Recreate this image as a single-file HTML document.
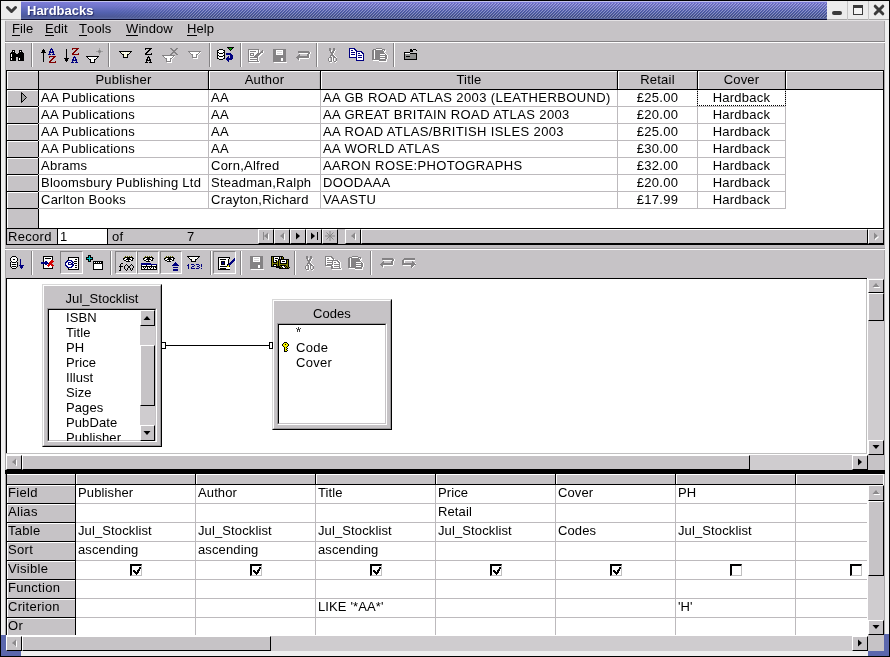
<!DOCTYPE html><html><head><meta charset="utf-8"><style>
html,body{margin:0;padding:0;width:890px;height:657px;overflow:hidden;background:#c6c3c6;}
#root{position:absolute;left:0;top:0;width:890px;height:657px;will-change:transform;}
body{position:relative;font-family:"Liberation Sans",sans-serif;font-size:13px;color:#000;}
div{position:absolute;box-sizing:border-box;}
.t{white-space:nowrap;line-height:15px;letter-spacing:0.2px;}
svg{position:absolute;overflow:visible}
u{text-decoration:none;border-bottom:1px solid #000;display:inline-block;line-height:11px;height:12px}
</style></head><body><div id="root">
<div style="left:0px;top:0px;width:890px;height:657px;background:#000"></div>
<div style="left:1px;top:1px;width:888px;height:655px;background:#efefef"></div>
<div style="left:5px;top:20px;width:880px;height:631px;background:#c6c3c6"></div>
<div style="left:5px;top:20px;width:1px;height:631px;background:#a9a7a9"></div>
<div style="left:884px;top:20px;width:1px;height:631px;background:#a9a7a9"></div>
<div style="left:5px;top:650px;width:880px;height:1px;background:#a9a7a9"></div>
<div style="left:1px;top:635px;width:5px;height:21px;background:#5b67ad"></div>
<div style="left:1px;top:651px;width:20px;height:5px;background:#5b67ad"></div>
<div style="left:884px;top:634px;width:5px;height:22px;background:#5b67ad"></div>
<div style="left:868px;top:651px;width:21px;height:5px;background:#5b67ad"></div>
<svg style="left:21px;top:1px" width="806" height="19" shape-rendering="crispEdges"><defs><linearGradient id="tg" x1="0" y1="0" x2="0" y2="1"><stop offset="0" stop-color="#c4c4f0"/><stop offset="0.06" stop-color="#c4c4f0"/><stop offset="0.07" stop-color="#7c7cd8"/><stop offset="0.25" stop-color="#7276cc"/><stop offset="0.6" stop-color="#5462b0"/><stop offset="0.85" stop-color="#4c5896"/><stop offset="0.9" stop-color="#5a68a2"/><stop offset="1" stop-color="#5a68a2"/></linearGradient><pattern id="tp" width="3" height="3" patternUnits="userSpaceOnUse"><rect x="2" y="0" width="1" height="1" fill="#fff" fill-opacity="0.3"/><rect x="1" y="1" width="1" height="1" fill="#fff" fill-opacity="0.3"/><rect x="0" y="2" width="1" height="1" fill="#fff" fill-opacity="0.3"/><rect x="0" y="0" width="1" height="1" fill="#000" fill-opacity="0.14"/><rect x="2" y="1" width="1" height="1" fill="#000" fill-opacity="0.14"/><rect x="1" y="2" width="1" height="1" fill="#000" fill-opacity="0.14"/></pattern><linearGradient id="tm" x1="0" y1="0" x2="1" y2="0"><stop offset="0.11" stop-color="#fff" stop-opacity="0"/><stop offset="0.22" stop-color="#fff" stop-opacity="1"/></linearGradient><mask id="tmask"><rect width="806" height="19" fill="url(#tm)"/></mask></defs><rect width="806" height="19" fill="url(#tg)"/><rect x="0" y="2" width="806" height="15" fill="url(#tp)" mask="url(#tmask)"/><rect x="0" y="18" width="806" height="1" fill="#0c0c30"/></svg>
<div style="left:1px;top:1px;width:20px;height:19px;background:#ececec;border-bottom:1px solid #a8a8a8"></div>
<svg style="left:5px;top:4px" width="14" height="12"><path d="M2.5 3.5 L6.5 7.5 L10.5 3.5" stroke="#3a3a3a" stroke-width="3" fill="none" stroke-linecap="round" stroke-linejoin="round"/></svg>
<div class="t" style="left:27px;top:3px;color:#fff;font-weight:bold;font-size:13px;letter-spacing:0;line-height:16px;text-shadow:1px 1px 1px rgba(0,0,50,0.55)">Hardbacks</div>
<div style="left:827px;top:1px;width:62px;height:19px;background:#ececec;border-bottom:1px solid #a8a8a8"></div>
<div style="left:847px;top:1px;width:1px;height:19px;background:#c4c4c4"></div>
<div style="left:868px;top:1px;width:1px;height:19px;background:#c4c4c4"></div>
<div style="left:832px;top:11px;width:10px;height:4px;background:#3a3a3a;border-radius:2px"></div>
<div style="left:853px;top:5px;width:10px;height:10px;border:1px solid #3a3a3a;border-top:3px solid #3a3a3a;background:#f4f4f4"></div>
<svg style="left:873px;top:4px" width="12" height="12"><path d="M2.2 2.2L9.8 9.8M9.8 2.2L2.2 9.8" stroke="#3a3a3a" stroke-width="3" stroke-linecap="round"/></svg>
<div style="left:5px;top:20px;width:880px;height:1px;background:#e4e2e4"></div>
<div style="left:5px;top:41px;width:880px;height:1px;background:#848284"></div>
<div style="left:5px;top:42px;width:880px;height:1px;background:#fff"></div>
<div class="t" style="left:12px;top:21px;letter-spacing:0.1px"><u>F</u>ile</div>
<div class="t" style="left:45px;top:21px;letter-spacing:0.1px"><u>E</u>dit</div>
<div class="t" style="left:79px;top:21px;letter-spacing:0.1px"><u>T</u>ools</div>
<div class="t" style="left:126px;top:21px;letter-spacing:0.1px"><u>W</u>indow</div>
<div class="t" style="left:187px;top:21px;letter-spacing:0.1px"><u>H</u>elp</div>
<div style="left:31px;top:43px;width:1px;height:24px;background:#848284"></div>
<div style="left:32px;top:43px;width:1px;height:24px;background:#fff"></div>
<div style="left:108px;top:43px;width:1px;height:24px;background:#848284"></div>
<div style="left:109px;top:43px;width:1px;height:24px;background:#fff"></div>
<div style="left:209px;top:43px;width:1px;height:24px;background:#848284"></div>
<div style="left:210px;top:43px;width:1px;height:24px;background:#fff"></div>
<div style="left:240px;top:43px;width:1px;height:24px;background:#848284"></div>
<div style="left:241px;top:43px;width:1px;height:24px;background:#fff"></div>
<div style="left:316px;top:43px;width:1px;height:24px;background:#848284"></div>
<div style="left:317px;top:43px;width:1px;height:24px;background:#fff"></div>
<div style="left:393px;top:43px;width:1px;height:24px;background:#848284"></div>
<div style="left:394px;top:43px;width:1px;height:24px;background:#fff"></div>
<div style="left:6px;top:70px;width:878px;height:174px;background:#fff;border:1px solid #000"></div>
<div style="left:7px;top:71px;width:876px;height:19px;background:#c6c3c6;border-top:1px solid #fff;border-bottom:1px solid #000"></div>
<div style="left:7px;top:71px;width:32px;height:157px;background:#c6c3c6;border-left:1px solid #fff;border-top:1px solid #fff"></div>
<div style="left:38px;top:71px;width:1px;height:157px;background:#000"></div>
<div style="left:7px;top:89px;width:32px;height:1px;background:#000"></div>
<div style="left:208px;top:71px;width:1px;height:19px;background:#000"></div>
<div style="left:209px;top:72px;width:1px;height:17px;background:#fff"></div>
<div style="left:207px;top:72px;width:1px;height:17px;background:#b4b2b4"></div>
<div class="t" style="left:39px;top:72px;width:169px;text-align:center">Publisher</div>
<div style="left:320px;top:71px;width:1px;height:19px;background:#000"></div>
<div style="left:321px;top:72px;width:1px;height:17px;background:#fff"></div>
<div style="left:319px;top:72px;width:1px;height:17px;background:#b4b2b4"></div>
<div class="t" style="left:209px;top:72px;width:111px;text-align:center">Author</div>
<div style="left:617px;top:71px;width:1px;height:19px;background:#000"></div>
<div style="left:618px;top:72px;width:1px;height:17px;background:#fff"></div>
<div style="left:616px;top:72px;width:1px;height:17px;background:#b4b2b4"></div>
<div class="t" style="left:321px;top:72px;width:296px;text-align:center">Title</div>
<div style="left:697px;top:71px;width:1px;height:19px;background:#000"></div>
<div style="left:698px;top:72px;width:1px;height:17px;background:#fff"></div>
<div style="left:696px;top:72px;width:1px;height:17px;background:#b4b2b4"></div>
<div class="t" style="left:618px;top:72px;width:79px;text-align:center">Retail</div>
<div style="left:785px;top:71px;width:1px;height:19px;background:#000"></div>
<div style="left:786px;top:72px;width:1px;height:17px;background:#fff"></div>
<div style="left:784px;top:72px;width:1px;height:17px;background:#b4b2b4"></div>
<div class="t" style="left:698px;top:72px;width:87px;text-align:center">Cover</div>
<div style="left:7px;top:106px;width:31px;height:1px;background:#000"></div>
<div style="left:8px;top:90px;width:30px;height:16px;border-top:1px solid #fff"></div>
<div style="left:38px;top:106px;width:747px;height:1px;background:#bdbabd"></div>
<div style="left:208px;top:90px;width:1px;height:17px;background:#bdbabd"></div>
<div style="left:320px;top:90px;width:1px;height:17px;background:#bdbabd"></div>
<div style="left:617px;top:90px;width:1px;height:17px;background:#bdbabd"></div>
<div style="left:697px;top:90px;width:1px;height:17px;background:#bdbabd"></div>
<div style="left:785px;top:90px;width:1px;height:17px;background:#bdbabd"></div>
<div class="t" style="left:41px;top:90px;letter-spacing:0.25px">AA Publications</div>
<div class="t" style="left:211px;top:90px;letter-spacing:0.25px">AA</div>
<div class="t" style="left:323px;top:90px;letter-spacing:0.38px">AA GB ROAD ATLAS 2003 (LEATHERBOUND)</div>
<div class="t" style="left:618px;top:90px;width:79px;text-align:center;letter-spacing:0.25px">£25.00</div>
<div class="t" style="left:698px;top:90px;width:87px;text-align:center;letter-spacing:0.25px">Hardback</div>
<div style="left:7px;top:123px;width:31px;height:1px;background:#000"></div>
<div style="left:8px;top:107px;width:30px;height:16px;border-top:1px solid #fff"></div>
<div style="left:38px;top:123px;width:747px;height:1px;background:#bdbabd"></div>
<div style="left:208px;top:107px;width:1px;height:17px;background:#bdbabd"></div>
<div style="left:320px;top:107px;width:1px;height:17px;background:#bdbabd"></div>
<div style="left:617px;top:107px;width:1px;height:17px;background:#bdbabd"></div>
<div style="left:697px;top:107px;width:1px;height:17px;background:#bdbabd"></div>
<div style="left:785px;top:107px;width:1px;height:17px;background:#bdbabd"></div>
<div class="t" style="left:41px;top:107px;letter-spacing:0.25px">AA Publications</div>
<div class="t" style="left:211px;top:107px;letter-spacing:0.25px">AA</div>
<div class="t" style="left:323px;top:107px;letter-spacing:0.38px">AA GREAT BRITAIN ROAD ATLAS 2003</div>
<div class="t" style="left:618px;top:107px;width:79px;text-align:center;letter-spacing:0.25px">£20.00</div>
<div class="t" style="left:698px;top:107px;width:87px;text-align:center;letter-spacing:0.25px">Hardback</div>
<div style="left:7px;top:140px;width:31px;height:1px;background:#000"></div>
<div style="left:8px;top:124px;width:30px;height:16px;border-top:1px solid #fff"></div>
<div style="left:38px;top:140px;width:747px;height:1px;background:#bdbabd"></div>
<div style="left:208px;top:124px;width:1px;height:17px;background:#bdbabd"></div>
<div style="left:320px;top:124px;width:1px;height:17px;background:#bdbabd"></div>
<div style="left:617px;top:124px;width:1px;height:17px;background:#bdbabd"></div>
<div style="left:697px;top:124px;width:1px;height:17px;background:#bdbabd"></div>
<div style="left:785px;top:124px;width:1px;height:17px;background:#bdbabd"></div>
<div class="t" style="left:41px;top:124px;letter-spacing:0.25px">AA Publications</div>
<div class="t" style="left:211px;top:124px;letter-spacing:0.25px">AA</div>
<div class="t" style="left:323px;top:124px;letter-spacing:0.38px">AA ROAD ATLAS/BRITISH ISLES 2003</div>
<div class="t" style="left:618px;top:124px;width:79px;text-align:center;letter-spacing:0.25px">£25.00</div>
<div class="t" style="left:698px;top:124px;width:87px;text-align:center;letter-spacing:0.25px">Hardback</div>
<div style="left:7px;top:157px;width:31px;height:1px;background:#000"></div>
<div style="left:8px;top:141px;width:30px;height:16px;border-top:1px solid #fff"></div>
<div style="left:38px;top:157px;width:747px;height:1px;background:#bdbabd"></div>
<div style="left:208px;top:141px;width:1px;height:17px;background:#bdbabd"></div>
<div style="left:320px;top:141px;width:1px;height:17px;background:#bdbabd"></div>
<div style="left:617px;top:141px;width:1px;height:17px;background:#bdbabd"></div>
<div style="left:697px;top:141px;width:1px;height:17px;background:#bdbabd"></div>
<div style="left:785px;top:141px;width:1px;height:17px;background:#bdbabd"></div>
<div class="t" style="left:41px;top:141px;letter-spacing:0.25px">AA Publications</div>
<div class="t" style="left:211px;top:141px;letter-spacing:0.25px">AA</div>
<div class="t" style="left:323px;top:141px;letter-spacing:0.38px">AA WORLD ATLAS</div>
<div class="t" style="left:618px;top:141px;width:79px;text-align:center;letter-spacing:0.25px">£30.00</div>
<div class="t" style="left:698px;top:141px;width:87px;text-align:center;letter-spacing:0.25px">Hardback</div>
<div style="left:7px;top:174px;width:31px;height:1px;background:#000"></div>
<div style="left:8px;top:158px;width:30px;height:16px;border-top:1px solid #fff"></div>
<div style="left:38px;top:174px;width:747px;height:1px;background:#bdbabd"></div>
<div style="left:208px;top:158px;width:1px;height:17px;background:#bdbabd"></div>
<div style="left:320px;top:158px;width:1px;height:17px;background:#bdbabd"></div>
<div style="left:617px;top:158px;width:1px;height:17px;background:#bdbabd"></div>
<div style="left:697px;top:158px;width:1px;height:17px;background:#bdbabd"></div>
<div style="left:785px;top:158px;width:1px;height:17px;background:#bdbabd"></div>
<div class="t" style="left:41px;top:158px;letter-spacing:0.25px">Abrams</div>
<div class="t" style="left:211px;top:158px;letter-spacing:0.25px">Corn,Alfred</div>
<div class="t" style="left:323px;top:158px;letter-spacing:0.38px">AARON ROSE:PHOTOGRAPHS</div>
<div class="t" style="left:618px;top:158px;width:79px;text-align:center;letter-spacing:0.25px">£32.00</div>
<div class="t" style="left:698px;top:158px;width:87px;text-align:center;letter-spacing:0.25px">Hardback</div>
<div style="left:7px;top:191px;width:31px;height:1px;background:#000"></div>
<div style="left:8px;top:175px;width:30px;height:16px;border-top:1px solid #fff"></div>
<div style="left:38px;top:191px;width:747px;height:1px;background:#bdbabd"></div>
<div style="left:208px;top:175px;width:1px;height:17px;background:#bdbabd"></div>
<div style="left:320px;top:175px;width:1px;height:17px;background:#bdbabd"></div>
<div style="left:617px;top:175px;width:1px;height:17px;background:#bdbabd"></div>
<div style="left:697px;top:175px;width:1px;height:17px;background:#bdbabd"></div>
<div style="left:785px;top:175px;width:1px;height:17px;background:#bdbabd"></div>
<div class="t" style="left:41px;top:175px;letter-spacing:0.25px">Bloomsbury Publishing Ltd</div>
<div class="t" style="left:211px;top:175px;letter-spacing:0.25px">Steadman,Ralph</div>
<div class="t" style="left:323px;top:175px;letter-spacing:0.38px">DOODAAA</div>
<div class="t" style="left:618px;top:175px;width:79px;text-align:center;letter-spacing:0.25px">£20.00</div>
<div class="t" style="left:698px;top:175px;width:87px;text-align:center;letter-spacing:0.25px">Hardback</div>
<div style="left:7px;top:208px;width:31px;height:1px;background:#000"></div>
<div style="left:8px;top:192px;width:30px;height:16px;border-top:1px solid #fff"></div>
<div style="left:38px;top:208px;width:747px;height:1px;background:#bdbabd"></div>
<div style="left:208px;top:192px;width:1px;height:17px;background:#bdbabd"></div>
<div style="left:320px;top:192px;width:1px;height:17px;background:#bdbabd"></div>
<div style="left:617px;top:192px;width:1px;height:17px;background:#bdbabd"></div>
<div style="left:697px;top:192px;width:1px;height:17px;background:#bdbabd"></div>
<div style="left:785px;top:192px;width:1px;height:17px;background:#bdbabd"></div>
<div class="t" style="left:41px;top:192px;letter-spacing:0.25px">Carlton Books</div>
<div class="t" style="left:211px;top:192px;letter-spacing:0.25px">Crayton,Richard</div>
<div class="t" style="left:323px;top:192px;letter-spacing:0.38px">VAASTU</div>
<div class="t" style="left:618px;top:192px;width:79px;text-align:center;letter-spacing:0.25px">£17.99</div>
<div class="t" style="left:698px;top:192px;width:87px;text-align:center;letter-spacing:0.25px">Hardback</div>
<svg style="left:21px;top:92px" width="8" height="12"><path d="M0.5 0.5L5.5 5.5L0.5 10.5Z" fill="#a0a0a0" stroke="#000" stroke-width="1"/></svg>
<div style="left:697px;top:89px;width:89px;height:17px;border:1px dotted #000"></div>
<div style="left:6px;top:228px;width:878px;height:17px;background:#c6c3c6;border:1px solid #000"></div>
<div class="t" style="left:8px;top:229px;letter-spacing:0.3px">Record</div>
<div style="left:57px;top:228px;width:51px;height:17px;background:#fff;border:1px solid #000"></div>
<div class="t" style="left:60px;top:229px;">1</div>
<div class="t" style="left:112px;top:229px;">of</div>
<div class="t" style="left:187px;top:229px;">7</div>
<div style="left:258px;top:229px;width:16px;height:15px;background:#c6c3c6;border-top:1px solid #fff;border-left:1px solid #fff;border-right:1px solid #000;border-bottom:1px solid #000"></div>
<div style="left:274px;top:229px;width:16px;height:15px;background:#c6c3c6;border-top:1px solid #fff;border-left:1px solid #fff;border-right:1px solid #000;border-bottom:1px solid #000"></div>
<div style="left:290px;top:229px;width:16px;height:15px;background:#c6c3c6;border-top:1px solid #fff;border-left:1px solid #fff;border-right:1px solid #000;border-bottom:1px solid #000"></div>
<div style="left:306px;top:229px;width:16px;height:15px;background:#c6c3c6;border-top:1px solid #fff;border-left:1px solid #fff;border-right:1px solid #000;border-bottom:1px solid #000"></div>
<div style="left:322px;top:229px;width:16px;height:15px;background:#c6c3c6;border-top:1px solid #fff;border-left:1px solid #fff;border-right:1px solid #000;border-bottom:1px solid #000"></div>
<svg style="left:1px;top:1px" width="890" height="657"><path d="M268 232.5L268 239.5L264 236Z" fill="#fff"/></svg>
<svg style="left:0;top:0" width="890" height="657"><path d="M268 232.5L268 239.5L264 236Z" fill="#8c8a8c"/></svg>
<div style="left:263px;top:232px;width:1px;height:8px;background:#8c8a8c"></div>
<svg style="left:1px;top:1px" width="890" height="657"><path d="M284 232.5L284 239.5L280 236Z" fill="#fff"/></svg>
<svg style="left:0;top:0" width="890" height="657"><path d="M284 232.5L284 239.5L280 236Z" fill="#8c8a8c"/></svg>
<svg style="left:0;top:0" width="890" height="657"><path d="M296 232.5L296 239.5L300 236Z" fill="#000"/></svg>
<svg style="left:0;top:0" width="890" height="657"><path d="M311 232.5L311 239.5L315 236Z" fill="#000"/></svg>
<div style="left:317px;top:232px;width:1px;height:8px;background:#000"></div>
<svg style="left:325px;top:231px" width="10" height="10" viewBox="0 0 10 10" shape-rendering="crispEdges"><path d="M5 0V10M0 5H10M1.5 1.5L8.5 8.5M8.5 1.5L1.5 8.5" stroke="#888" stroke-width="1" shape-rendering="auto"/></svg>
<div style="left:345px;top:229px;width:16px;height:15px;background:#c6c3c6;border-top:1px solid #fff;border-left:1px solid #fff;border-right:1px solid #000;border-bottom:1px solid #000"></div>
<svg style="left:1px;top:1px" width="890" height="657"><path d="M355 232.5L355 239.5L351 236Z" fill="#fff"/></svg>
<svg style="left:0;top:0" width="890" height="657"><path d="M355 232.5L355 239.5L351 236Z" fill="#8c8a8c"/></svg>
<div style="left:361px;top:229px;width:507px;height:15px;background:#c6c3c6;border-top:1px solid #fff;border-left:1px solid #fff;border-right:1px solid #000;border-bottom:1px solid #000"></div>
<div style="left:868px;top:229px;width:16px;height:15px;background:#c6c3c6;border-top:1px solid #fff;border-left:1px solid #fff;border-right:1px solid #000;border-bottom:1px solid #000"></div>
<svg style="left:1px;top:1px" width="890" height="657"><path d="M874 232.5L874 239.5L878 236Z" fill="#fff"/></svg>
<svg style="left:0;top:0" width="890" height="657"><path d="M874 232.5L874 239.5L878 236Z" fill="#8c8a8c"/></svg>
<div style="left:5px;top:245px;width:880px;height:3px;background:#bfbcbf"></div>
<div style="left:5px;top:248px;width:880px;height:1px;background:#9c9a9c"></div>
<div style="left:5px;top:249px;width:880px;height:1px;background:#fff"></div>
<div style="left:31px;top:251px;width:1px;height:24px;background:#848284"></div>
<div style="left:32px;top:251px;width:1px;height:24px;background:#fff"></div>
<div style="left:110px;top:251px;width:1px;height:24px;background:#848284"></div>
<div style="left:111px;top:251px;width:1px;height:24px;background:#fff"></div>
<div style="left:210px;top:251px;width:1px;height:24px;background:#848284"></div>
<div style="left:211px;top:251px;width:1px;height:24px;background:#fff"></div>
<div style="left:240px;top:251px;width:1px;height:24px;background:#848284"></div>
<div style="left:241px;top:251px;width:1px;height:24px;background:#fff"></div>
<div style="left:294px;top:251px;width:1px;height:24px;background:#848284"></div>
<div style="left:295px;top:251px;width:1px;height:24px;background:#fff"></div>
<div style="left:370px;top:251px;width:1px;height:24px;background:#848284"></div>
<div style="left:371px;top:251px;width:1px;height:24px;background:#fff"></div>
<div style="left:60px;top:251px;width:23px;height:23px;background:#cdcacd;border-top:1px solid #848284;border-left:1px solid #848284;border-right:1px solid #fff;border-bottom:1px solid #fff"></div>
<div style="left:115px;top:251px;width:22px;height:23px;background:#cdcacd;border-top:1px solid #848284;border-left:1px solid #848284;border-right:1px solid #fff;border-bottom:1px solid #fff"></div>
<div style="left:137px;top:251px;width:22px;height:23px;background:#cdcacd;border-top:1px solid #848284;border-left:1px solid #848284;border-right:1px solid #fff;border-bottom:1px solid #fff"></div>
<div style="left:160px;top:251px;width:22px;height:23px;background:#cdcacd;border-top:1px solid #848284;border-left:1px solid #848284;border-right:1px solid #fff;border-bottom:1px solid #fff"></div>
<div style="left:213px;top:251px;width:23px;height:23px;background:#cdcacd;border-top:1px solid #848284;border-left:1px solid #848284;border-right:1px solid #fff;border-bottom:1px solid #fff"></div>
<svg style="left:10px;top:50px" width="14" height="11" shape-rendering="crispEdges"><rect x="2" y="0" width="3" height="1" fill="#000000"/><rect x="9" y="0" width="3" height="1" fill="#000000"/><rect x="2" y="1" width="1" height="1" fill="#000000"/><rect x="3" y="1" width="1" height="1" fill="#ffffff"/><rect x="4" y="1" width="1" height="1" fill="#000000"/><rect x="9" y="1" width="1" height="1" fill="#000000"/><rect x="10" y="1" width="1" height="1" fill="#ffffff"/><rect x="11" y="1" width="1" height="1" fill="#000000"/><rect x="1" y="2" width="4" height="1" fill="#000000"/><rect x="9" y="2" width="4" height="1" fill="#000000"/><rect x="0" y="3" width="6" height="1" fill="#000000"/><rect x="8" y="3" width="6" height="1" fill="#000000"/><rect x="0" y="4" width="1" height="1" fill="#000000"/><rect x="1" y="4" width="1" height="1" fill="#ffffff"/><rect x="2" y="4" width="12" height="1" fill="#000000"/><rect x="0" y="5" width="1" height="1" fill="#000000"/><rect x="1" y="5" width="1" height="1" fill="#ffffff"/><rect x="2" y="5" width="12" height="1" fill="#000000"/><rect x="0" y="6" width="1" height="1" fill="#000000"/><rect x="1" y="6" width="1" height="1" fill="#ffffff"/><rect x="2" y="6" width="12" height="1" fill="#000000"/><rect x="0" y="7" width="6" height="1" fill="#000000"/><rect x="8" y="7" width="6" height="1" fill="#000000"/><rect x="0" y="8" width="1" height="1" fill="#000000"/><rect x="1" y="8" width="1" height="1" fill="#ffffff"/><rect x="2" y="8" width="4" height="1" fill="#000000"/><rect x="8" y="8" width="1" height="1" fill="#000000"/><rect x="9" y="8" width="1" height="1" fill="#ffffff"/><rect x="10" y="8" width="4" height="1" fill="#000000"/><rect x="0" y="9" width="1" height="1" fill="#000000"/><rect x="1" y="9" width="1" height="1" fill="#ffffff"/><rect x="2" y="9" width="4" height="1" fill="#000000"/><rect x="8" y="9" width="1" height="1" fill="#000000"/><rect x="9" y="9" width="1" height="1" fill="#ffffff"/><rect x="10" y="9" width="4" height="1" fill="#000000"/><rect x="0" y="10" width="6" height="1" fill="#000000"/><rect x="8" y="10" width="6" height="1" fill="#000000"/></svg>
<svg style="left:41px;top:48px" width="15" height="15" shape-rendering="crispEdges"><rect x="10" y="0" width="1" height="1" fill="#000080"/><rect x="2" y="1" width="1" height="1" fill="#000000"/><rect x="9" y="1" width="3" height="1" fill="#000080"/><rect x="1" y="2" width="3" height="1" fill="#000000"/><rect x="9" y="2" width="1" height="1" fill="#000080"/><rect x="11" y="2" width="1" height="1" fill="#000080"/><rect x="1" y="3" width="3" height="1" fill="#000000"/><rect x="8" y="3" width="2" height="1" fill="#000080"/><rect x="11" y="3" width="2" height="1" fill="#000080"/><rect x="0" y="4" width="5" height="1" fill="#000000"/><rect x="8" y="4" width="5" height="1" fill="#000080"/><rect x="2" y="5" width="1" height="1" fill="#000000"/><rect x="8" y="5" width="1" height="1" fill="#000080"/><rect x="12" y="5" width="1" height="1" fill="#000080"/><rect x="2" y="6" width="1" height="1" fill="#000000"/><rect x="7" y="6" width="3" height="1" fill="#000080"/><rect x="11" y="6" width="3" height="1" fill="#000080"/><rect x="2" y="7" width="1" height="1" fill="#000000"/><rect x="2" y="8" width="1" height="1" fill="#000000"/><rect x="8" y="8" width="7" height="1" fill="#800000"/><rect x="2" y="9" width="1" height="1" fill="#000000"/><rect x="8" y="9" width="1" height="1" fill="#800000"/><rect x="12" y="9" width="2" height="1" fill="#800000"/><rect x="2" y="10" width="1" height="1" fill="#000000"/><rect x="11" y="10" width="2" height="1" fill="#800000"/><rect x="2" y="11" width="1" height="1" fill="#000000"/><rect x="10" y="11" width="2" height="1" fill="#800000"/><rect x="2" y="12" width="1" height="1" fill="#000000"/><rect x="9" y="12" width="2" height="1" fill="#800000"/><rect x="2" y="13" width="1" height="1" fill="#000000"/><rect x="8" y="13" width="2" height="1" fill="#800000"/><rect x="14" y="13" width="1" height="1" fill="#800000"/><rect x="8" y="14" width="7" height="1" fill="#800000"/></svg>
<svg style="left:64px;top:48px" width="15" height="15" shape-rendering="crispEdges"><rect x="8" y="0" width="7" height="1" fill="#800000"/><rect x="2" y="1" width="1" height="1" fill="#000000"/><rect x="8" y="1" width="1" height="1" fill="#800000"/><rect x="12" y="1" width="2" height="1" fill="#800000"/><rect x="2" y="2" width="1" height="1" fill="#000000"/><rect x="11" y="2" width="2" height="1" fill="#800000"/><rect x="2" y="3" width="1" height="1" fill="#000000"/><rect x="10" y="3" width="2" height="1" fill="#800000"/><rect x="2" y="4" width="1" height="1" fill="#000000"/><rect x="9" y="4" width="2" height="1" fill="#800000"/><rect x="2" y="5" width="1" height="1" fill="#000000"/><rect x="8" y="5" width="2" height="1" fill="#800000"/><rect x="14" y="5" width="1" height="1" fill="#800000"/><rect x="2" y="6" width="1" height="1" fill="#000000"/><rect x="8" y="6" width="7" height="1" fill="#800000"/><rect x="2" y="7" width="1" height="1" fill="#000000"/><rect x="2" y="8" width="1" height="1" fill="#000000"/><rect x="10" y="8" width="1" height="1" fill="#000080"/><rect x="2" y="9" width="1" height="1" fill="#000000"/><rect x="9" y="9" width="3" height="1" fill="#000080"/><rect x="0" y="10" width="5" height="1" fill="#000000"/><rect x="9" y="10" width="1" height="1" fill="#000080"/><rect x="11" y="10" width="1" height="1" fill="#000080"/><rect x="1" y="11" width="3" height="1" fill="#000000"/><rect x="8" y="11" width="2" height="1" fill="#000080"/><rect x="11" y="11" width="2" height="1" fill="#000080"/><rect x="1" y="12" width="3" height="1" fill="#000000"/><rect x="8" y="12" width="5" height="1" fill="#000080"/><rect x="2" y="13" width="1" height="1" fill="#000000"/><rect x="8" y="13" width="1" height="1" fill="#000080"/><rect x="12" y="13" width="1" height="1" fill="#000080"/><rect x="7" y="14" width="3" height="1" fill="#000080"/><rect x="11" y="14" width="3" height="1" fill="#000080"/></svg>
<svg style="left:86px;top:56px" width="13" height="7" shape-rendering="crispEdges"><rect x="0" y="0" width="13" height="1" fill="#000000"/><rect x="1" y="1" width="1" height="1" fill="#000000"/><rect x="2" y="1" width="9" height="1" fill="#ffffff"/><rect x="11" y="1" width="1" height="1" fill="#000000"/><rect x="2" y="2" width="1" height="1" fill="#000000"/><rect x="3" y="2" width="3" height="1" fill="#ffffff"/><rect x="6" y="2" width="1" height="1" fill="#f4f4d8"/><rect x="7" y="2" width="3" height="1" fill="#ffffff"/><rect x="10" y="2" width="1" height="1" fill="#000000"/><rect x="3" y="3" width="2" height="1" fill="#000000"/><rect x="5" y="3" width="3" height="1" fill="#ffffff"/><rect x="8" y="3" width="2" height="1" fill="#000000"/><rect x="4" y="4" width="1" height="1" fill="#000000"/><rect x="5" y="4" width="3" height="1" fill="#ffffff"/><rect x="8" y="4" width="1" height="1" fill="#000000"/><rect x="4" y="5" width="1" height="1" fill="#000000"/><rect x="5" y="5" width="3" height="1" fill="#ffffff"/><rect x="8" y="5" width="1" height="1" fill="#000000"/><rect x="4" y="6" width="5" height="1" fill="#000000"/></svg>
<svg style="left:96px;top:48px" width="7" height="7" shape-rendering="crispEdges"><rect x="3" y="0" width="1" height="1" fill="#a0a0a0"/><rect x="3" y="1" width="1" height="1" fill="#a0a0a0"/><rect x="2" y="2" width="1" height="1" fill="#a0a0a0"/><rect x="3" y="2" width="1" height="1" fill="#848284"/><rect x="4" y="2" width="1" height="1" fill="#a0a0a0"/><rect x="0" y="3" width="2" height="1" fill="#a0a0a0"/><rect x="2" y="3" width="3" height="1" fill="#848284"/><rect x="5" y="3" width="2" height="1" fill="#a0a0a0"/><rect x="2" y="4" width="1" height="1" fill="#a0a0a0"/><rect x="3" y="4" width="1" height="1" fill="#848284"/><rect x="4" y="4" width="1" height="1" fill="#a0a0a0"/><rect x="3" y="5" width="1" height="1" fill="#a0a0a0"/><rect x="3" y="6" width="1" height="1" fill="#a0a0a0"/></svg>
<svg style="left:119px;top:51px" width="13" height="7" shape-rendering="crispEdges"><rect x="0" y="0" width="13" height="1" fill="#000000"/><rect x="1" y="1" width="1" height="1" fill="#000000"/><rect x="2" y="1" width="3" height="1" fill="#f4f4d8"/><rect x="5" y="1" width="1" height="1" fill="#ffffff"/><rect x="6" y="1" width="1" height="1" fill="#f4f4d8"/><rect x="7" y="1" width="1" height="1" fill="#ffffff"/><rect x="8" y="1" width="3" height="1" fill="#f4f4d8"/><rect x="11" y="1" width="1" height="1" fill="#000000"/><rect x="2" y="2" width="1" height="1" fill="#000000"/><rect x="3" y="2" width="2" height="1" fill="#f4f4d8"/><rect x="5" y="2" width="1" height="1" fill="#ffffff"/><rect x="6" y="2" width="1" height="1" fill="#f4f4d8"/><rect x="7" y="2" width="1" height="1" fill="#ffffff"/><rect x="8" y="2" width="2" height="1" fill="#f4f4d8"/><rect x="10" y="2" width="1" height="1" fill="#000000"/><rect x="3" y="3" width="2" height="1" fill="#000000"/><rect x="5" y="3" width="3" height="1" fill="#f4f4d8"/><rect x="8" y="3" width="2" height="1" fill="#000000"/><rect x="4" y="4" width="1" height="1" fill="#000000"/><rect x="5" y="4" width="3" height="1" fill="#f4f4d8"/><rect x="8" y="4" width="1" height="1" fill="#000000"/><rect x="4" y="5" width="1" height="1" fill="#000000"/><rect x="5" y="5" width="3" height="1" fill="#f4f4d8"/><rect x="8" y="5" width="1" height="1" fill="#000000"/><rect x="4" y="6" width="5" height="1" fill="#000000"/></svg>
<svg style="left:145px;top:48px" width="8" height="15" shape-rendering="crispEdges"><rect x="0" y="0" width="7" height="1" fill="#000000"/><rect x="0" y="1" width="1" height="1" fill="#000000"/><rect x="4" y="1" width="2" height="1" fill="#000000"/><rect x="3" y="2" width="2" height="1" fill="#000000"/><rect x="2" y="3" width="2" height="1" fill="#000000"/><rect x="1" y="4" width="2" height="1" fill="#000000"/><rect x="0" y="5" width="2" height="1" fill="#000000"/><rect x="6" y="5" width="1" height="1" fill="#000000"/><rect x="0" y="6" width="7" height="1" fill="#000000"/><rect x="3" y="8" width="1" height="1" fill="#000000"/><rect x="2" y="9" width="3" height="1" fill="#000000"/><rect x="2" y="10" width="1" height="1" fill="#000000"/><rect x="4" y="10" width="1" height="1" fill="#000000"/><rect x="1" y="11" width="2" height="1" fill="#000000"/><rect x="4" y="11" width="2" height="1" fill="#000000"/><rect x="1" y="12" width="5" height="1" fill="#000000"/><rect x="1" y="13" width="1" height="1" fill="#000000"/><rect x="5" y="13" width="1" height="1" fill="#000000"/><rect x="0" y="14" width="3" height="1" fill="#000000"/><rect x="4" y="14" width="3" height="1" fill="#000000"/></svg>
<svg style="left:162px;top:48px" width="16" height="16" shape-rendering="crispEdges"><rect x="8" y="0" width="2" height="1" fill="#848284"/><rect x="14" y="0" width="2" height="1" fill="#848284"/><rect x="9" y="1" width="2" height="1" fill="#848284"/><rect x="13" y="1" width="2" height="1" fill="#848284"/><rect x="10" y="2" width="4" height="1" fill="#848284"/><rect x="11" y="3" width="2" height="1" fill="#848284"/><rect x="10" y="4" width="4" height="1" fill="#848284"/><rect x="9" y="5" width="2" height="1" fill="#848284"/><rect x="13" y="5" width="2" height="1" fill="#848284"/><rect x="8" y="6" width="2" height="1" fill="#848284"/><rect x="14" y="6" width="2" height="1" fill="#848284"/><rect x="0" y="7" width="13" height="1" fill="#848284"/><rect x="1" y="8" width="1" height="1" fill="#848284"/><rect x="2" y="8" width="9" height="1" fill="#ffffff"/><rect x="11" y="8" width="1" height="1" fill="#848284"/><rect x="12" y="8" width="1" height="1" fill="#ffffff"/><rect x="2" y="9" width="1" height="1" fill="#848284"/><rect x="3" y="9" width="7" height="1" fill="#ffffff"/><rect x="10" y="9" width="1" height="1" fill="#848284"/><rect x="11" y="9" width="1" height="1" fill="#ffffff"/><rect x="3" y="10" width="2" height="1" fill="#848284"/><rect x="5" y="10" width="3" height="1" fill="#ffffff"/><rect x="8" y="10" width="2" height="1" fill="#848284"/><rect x="10" y="10" width="1" height="1" fill="#ffffff"/><rect x="4" y="11" width="1" height="1" fill="#848284"/><rect x="5" y="11" width="3" height="1" fill="#ffffff"/><rect x="8" y="11" width="1" height="1" fill="#848284"/><rect x="9" y="11" width="1" height="1" fill="#ffffff"/><rect x="4" y="12" width="1" height="1" fill="#848284"/><rect x="5" y="12" width="3" height="1" fill="#ffffff"/><rect x="8" y="12" width="1" height="1" fill="#848284"/><rect x="9" y="12" width="1" height="1" fill="#ffffff"/><rect x="4" y="13" width="5" height="1" fill="#848284"/><rect x="9" y="13" width="1" height="1" fill="#ffffff"/><rect x="5" y="14" width="5" height="1" fill="#ffffff"/></svg>
<svg style="left:188px;top:51px" width="13" height="8" shape-rendering="crispEdges"><rect x="0" y="0" width="13" height="1" fill="#848284"/><rect x="1" y="1" width="1" height="1" fill="#848284"/><rect x="2" y="1" width="9" height="1" fill="#ffffff"/><rect x="11" y="1" width="1" height="1" fill="#848284"/><rect x="12" y="1" width="1" height="1" fill="#ffffff"/><rect x="2" y="2" width="1" height="1" fill="#848284"/><rect x="3" y="2" width="7" height="1" fill="#ffffff"/><rect x="10" y="2" width="1" height="1" fill="#848284"/><rect x="11" y="2" width="1" height="1" fill="#ffffff"/><rect x="3" y="3" width="2" height="1" fill="#848284"/><rect x="5" y="3" width="3" height="1" fill="#ffffff"/><rect x="8" y="3" width="2" height="1" fill="#848284"/><rect x="10" y="3" width="1" height="1" fill="#ffffff"/><rect x="4" y="4" width="1" height="1" fill="#848284"/><rect x="5" y="4" width="3" height="1" fill="#ffffff"/><rect x="8" y="4" width="1" height="1" fill="#848284"/><rect x="9" y="4" width="1" height="1" fill="#ffffff"/><rect x="4" y="5" width="1" height="1" fill="#848284"/><rect x="5" y="5" width="3" height="1" fill="#ffffff"/><rect x="8" y="5" width="1" height="1" fill="#848284"/><rect x="9" y="5" width="1" height="1" fill="#ffffff"/><rect x="4" y="6" width="5" height="1" fill="#848284"/><rect x="9" y="6" width="1" height="1" fill="#ffffff"/><rect x="5" y="7" width="5" height="1" fill="#ffffff"/></svg>
<svg style="left:217px;top:47px" width="18" height="15" shape-rendering="crispEdges"><rect x="10" y="0" width="7" height="1" fill="#000000"/><rect x="11" y="1" width="1" height="1" fill="#000000"/><rect x="12" y="1" width="3" height="1" fill="#00a000"/><rect x="15" y="1" width="1" height="1" fill="#000000"/><rect x="2" y="2" width="4" height="1" fill="#000000"/><rect x="12" y="2" width="1" height="1" fill="#000000"/><rect x="13" y="2" width="1" height="1" fill="#00a000"/><rect x="14" y="2" width="1" height="1" fill="#000000"/><rect x="0" y="3" width="2" height="1" fill="#000000"/><rect x="2" y="3" width="4" height="1" fill="#ffffff"/><rect x="6" y="3" width="2" height="1" fill="#000000"/><rect x="13" y="3" width="1" height="1" fill="#000000"/><rect x="0" y="4" width="1" height="1" fill="#000000"/><rect x="1" y="4" width="6" height="1" fill="#ffffff"/><rect x="7" y="4" width="1" height="1" fill="#000000"/><rect x="0" y="5" width="2" height="1" fill="#000000"/><rect x="2" y="5" width="4" height="1" fill="#ffffff"/><rect x="6" y="5" width="2" height="1" fill="#000000"/><rect x="0" y="6" width="1" height="1" fill="#000000"/><rect x="1" y="6" width="1" height="1" fill="#ffffff"/><rect x="2" y="6" width="4" height="1" fill="#000000"/><rect x="6" y="6" width="1" height="1" fill="#ffffff"/><rect x="7" y="6" width="1" height="1" fill="#000000"/><rect x="9" y="6" width="5" height="1" fill="#000080"/><rect x="0" y="7" width="1" height="1" fill="#000000"/><rect x="1" y="7" width="6" height="1" fill="#ffffff"/><rect x="7" y="7" width="1" height="1" fill="#000000"/><rect x="9" y="7" width="6" height="1" fill="#000080"/><rect x="0" y="8" width="2" height="1" fill="#000000"/><rect x="2" y="8" width="4" height="1" fill="#ffffff"/><rect x="6" y="8" width="2" height="1" fill="#000000"/><rect x="13" y="8" width="3" height="1" fill="#000080"/><rect x="0" y="9" width="1" height="1" fill="#000000"/><rect x="1" y="9" width="1" height="1" fill="#ffffff"/><rect x="2" y="9" width="4" height="1" fill="#000000"/><rect x="6" y="9" width="1" height="1" fill="#ffffff"/><rect x="7" y="9" width="1" height="1" fill="#000000"/><rect x="11" y="9" width="1" height="1" fill="#000080"/><rect x="13" y="9" width="3" height="1" fill="#000080"/><rect x="0" y="10" width="1" height="1" fill="#000000"/><rect x="1" y="10" width="6" height="1" fill="#ffffff"/><rect x="7" y="10" width="1" height="1" fill="#000000"/><rect x="10" y="10" width="2" height="1" fill="#000080"/><rect x="13" y="10" width="3" height="1" fill="#000080"/><rect x="0" y="11" width="2" height="1" fill="#000000"/><rect x="2" y="11" width="4" height="1" fill="#ffffff"/><rect x="6" y="11" width="2" height="1" fill="#000000"/><rect x="9" y="11" width="7" height="1" fill="#000080"/><rect x="2" y="12" width="4" height="1" fill="#000000"/><rect x="9" y="12" width="6" height="1" fill="#000080"/><rect x="10" y="13" width="2" height="1" fill="#000080"/><rect x="11" y="14" width="1" height="1" fill="#000080"/></svg>
<svg style="left:248px;top:49px" width="17" height="14" shape-rendering="crispEdges"><rect x="0" y="0" width="11" height="1" fill="#848284"/><rect x="0" y="1" width="1" height="1" fill="#848284"/><rect x="1" y="1" width="9" height="1" fill="#ffffff"/><rect x="10" y="1" width="1" height="1" fill="#848284"/><rect x="11" y="1" width="1" height="1" fill="#ffffff"/><rect x="14" y="1" width="1" height="1" fill="#848284"/><rect x="0" y="2" width="1" height="1" fill="#848284"/><rect x="1" y="2" width="1" height="1" fill="#ffffff"/><rect x="2" y="2" width="6" height="1" fill="#848284"/><rect x="8" y="2" width="2" height="1" fill="#ffffff"/><rect x="10" y="2" width="1" height="1" fill="#848284"/><rect x="11" y="2" width="1" height="1" fill="#ffffff"/><rect x="13" y="2" width="2" height="1" fill="#848284"/><rect x="15" y="2" width="1" height="1" fill="#ffffff"/><rect x="0" y="3" width="1" height="1" fill="#848284"/><rect x="1" y="3" width="9" height="1" fill="#ffffff"/><rect x="10" y="3" width="1" height="1" fill="#848284"/><rect x="11" y="3" width="1" height="1" fill="#ffffff"/><rect x="12" y="3" width="3" height="1" fill="#848284"/><rect x="15" y="3" width="1" height="1" fill="#ffffff"/><rect x="0" y="4" width="1" height="1" fill="#848284"/><rect x="1" y="4" width="1" height="1" fill="#ffffff"/><rect x="2" y="4" width="4" height="1" fill="#848284"/><rect x="6" y="4" width="3" height="1" fill="#ffffff"/><rect x="9" y="4" width="4" height="1" fill="#848284"/><rect x="13" y="4" width="2" height="1" fill="#ffffff"/><rect x="0" y="5" width="1" height="1" fill="#848284"/><rect x="1" y="5" width="1" height="1" fill="#ffffff"/><rect x="2" y="5" width="1" height="1" fill="#848284"/><rect x="3" y="5" width="2" height="1" fill="#ffffff"/><rect x="5" y="5" width="1" height="1" fill="#848284"/><rect x="6" y="5" width="2" height="1" fill="#ffffff"/><rect x="8" y="5" width="4" height="1" fill="#848284"/><rect x="12" y="5" width="2" height="1" fill="#ffffff"/><rect x="0" y="6" width="1" height="1" fill="#848284"/><rect x="1" y="6" width="1" height="1" fill="#ffffff"/><rect x="2" y="6" width="4" height="1" fill="#848284"/><rect x="6" y="6" width="1" height="1" fill="#ffffff"/><rect x="7" y="6" width="4" height="1" fill="#848284"/><rect x="11" y="6" width="2" height="1" fill="#ffffff"/><rect x="0" y="7" width="1" height="1" fill="#848284"/><rect x="1" y="7" width="5" height="1" fill="#ffffff"/><rect x="6" y="7" width="4" height="1" fill="#848284"/><rect x="10" y="7" width="2" height="1" fill="#ffffff"/><rect x="0" y="8" width="1" height="1" fill="#848284"/><rect x="1" y="8" width="1" height="1" fill="#ffffff"/><rect x="2" y="8" width="8" height="1" fill="#848284"/><rect x="10" y="8" width="1" height="1" fill="#ffffff"/><rect x="0" y="9" width="1" height="1" fill="#848284"/><rect x="1" y="9" width="8" height="1" fill="#ffffff"/><rect x="9" y="9" width="1" height="1" fill="#848284"/><rect x="10" y="9" width="1" height="1" fill="#ffffff"/><rect x="0" y="10" width="1" height="1" fill="#848284"/><rect x="1" y="10" width="1" height="1" fill="#ffffff"/><rect x="2" y="10" width="8" height="1" fill="#848284"/><rect x="10" y="10" width="1" height="1" fill="#ffffff"/><rect x="0" y="11" width="1" height="1" fill="#848284"/><rect x="1" y="11" width="8" height="1" fill="#ffffff"/><rect x="9" y="11" width="1" height="1" fill="#848284"/><rect x="10" y="11" width="1" height="1" fill="#ffffff"/><rect x="0" y="12" width="11" height="1" fill="#848284"/><rect x="11" y="12" width="1" height="1" fill="#ffffff"/><rect x="1" y="13" width="11" height="1" fill="#ffffff"/></svg>
<svg style="left:273px;top:49px" width="14" height="14" shape-rendering="crispEdges"><rect x="0" y="0" width="13" height="1" fill="#848284"/><rect x="0" y="1" width="3" height="1" fill="#848284"/><rect x="3" y="1" width="7" height="1" fill="#ffffff"/><rect x="10" y="1" width="3" height="1" fill="#848284"/><rect x="0" y="2" width="3" height="1" fill="#848284"/><rect x="3" y="2" width="1" height="1" fill="#ffffff"/><rect x="4" y="2" width="5" height="1" fill="#d8d6d8"/><rect x="9" y="2" width="1" height="1" fill="#ffffff"/><rect x="10" y="2" width="3" height="1" fill="#848284"/><rect x="0" y="3" width="3" height="1" fill="#848284"/><rect x="3" y="3" width="7" height="1" fill="#ffffff"/><rect x="10" y="3" width="3" height="1" fill="#848284"/><rect x="0" y="4" width="3" height="1" fill="#848284"/><rect x="3" y="4" width="1" height="1" fill="#ffffff"/><rect x="4" y="4" width="5" height="1" fill="#d8d6d8"/><rect x="9" y="4" width="1" height="1" fill="#ffffff"/><rect x="10" y="4" width="3" height="1" fill="#848284"/><rect x="0" y="5" width="3" height="1" fill="#848284"/><rect x="3" y="5" width="7" height="1" fill="#ffffff"/><rect x="10" y="5" width="3" height="1" fill="#848284"/><rect x="0" y="6" width="13" height="1" fill="#848284"/><rect x="0" y="7" width="13" height="1" fill="#848284"/><rect x="0" y="8" width="13" height="1" fill="#848284"/><rect x="0" y="9" width="8" height="1" fill="#848284"/><rect x="8" y="9" width="2" height="1" fill="#ffffff"/><rect x="10" y="9" width="3" height="1" fill="#848284"/><rect x="0" y="10" width="8" height="1" fill="#848284"/><rect x="8" y="10" width="2" height="1" fill="#ffffff"/><rect x="10" y="10" width="3" height="1" fill="#848284"/><rect x="0" y="11" width="8" height="1" fill="#848284"/><rect x="8" y="11" width="2" height="1" fill="#ffffff"/><rect x="10" y="11" width="3" height="1" fill="#848284"/><rect x="0" y="12" width="13" height="1" fill="#848284"/><rect x="1" y="13" width="13" height="1" fill="#ffffff"/></svg>
<svg style="left:295px;top:51px" width="16" height="10" shape-rendering="crispEdges"><rect x="3" y="0" width="11" height="1" fill="#848284"/><rect x="3" y="1" width="12" height="1" fill="#848284"/><rect x="15" y="1" width="1" height="1" fill="#ffffff"/><rect x="4" y="2" width="9" height="1" fill="#ffffff"/><rect x="13" y="2" width="2" height="1" fill="#848284"/><rect x="15" y="2" width="1" height="1" fill="#ffffff"/><rect x="4" y="3" width="1" height="1" fill="#848284"/><rect x="12" y="3" width="2" height="1" fill="#848284"/><rect x="14" y="3" width="1" height="1" fill="#ffffff"/><rect x="3" y="4" width="2" height="1" fill="#848284"/><rect x="12" y="4" width="2" height="1" fill="#848284"/><rect x="14" y="4" width="1" height="1" fill="#ffffff"/><rect x="2" y="5" width="12" height="1" fill="#848284"/><rect x="14" y="5" width="1" height="1" fill="#ffffff"/><rect x="1" y="6" width="13" height="1" fill="#848284"/><rect x="14" y="6" width="1" height="1" fill="#ffffff"/><rect x="2" y="7" width="2" height="1" fill="#848284"/><rect x="4" y="7" width="10" height="1" fill="#ffffff"/><rect x="3" y="8" width="1" height="1" fill="#848284"/><rect x="4" y="8" width="1" height="1" fill="#ffffff"/><rect x="4" y="9" width="1" height="1" fill="#ffffff"/></svg>
<svg style="left:328px;top:48px" width="9" height="15" shape-rendering="crispEdges"><rect x="1" y="0" width="2" height="1" fill="#848284"/><rect x="5" y="0" width="2" height="1" fill="#848284"/><rect x="1" y="1" width="2" height="1" fill="#848284"/><rect x="5" y="1" width="2" height="1" fill="#848284"/><rect x="1" y="2" width="2" height="1" fill="#848284"/><rect x="3" y="2" width="1" height="1" fill="#ffffff"/><rect x="5" y="2" width="2" height="1" fill="#848284"/><rect x="7" y="2" width="1" height="1" fill="#ffffff"/><rect x="2" y="3" width="1" height="1" fill="#848284"/><rect x="3" y="3" width="1" height="1" fill="#ffffff"/><rect x="4" y="3" width="2" height="1" fill="#848284"/><rect x="6" y="3" width="1" height="1" fill="#ffffff"/><rect x="2" y="4" width="4" height="1" fill="#848284"/><rect x="6" y="4" width="1" height="1" fill="#ffffff"/><rect x="3" y="5" width="2" height="1" fill="#848284"/><rect x="5" y="5" width="1" height="1" fill="#ffffff"/><rect x="3" y="6" width="2" height="1" fill="#848284"/><rect x="5" y="6" width="1" height="1" fill="#ffffff"/><rect x="2" y="7" width="4" height="1" fill="#848284"/><rect x="6" y="7" width="1" height="1" fill="#ffffff"/><rect x="2" y="8" width="1" height="1" fill="#848284"/><rect x="3" y="8" width="1" height="1" fill="#ffffff"/><rect x="5" y="8" width="2" height="1" fill="#848284"/><rect x="7" y="8" width="1" height="1" fill="#ffffff"/><rect x="1" y="9" width="3" height="1" fill="#848284"/><rect x="4" y="9" width="1" height="1" fill="#ffffff"/><rect x="5" y="9" width="3" height="1" fill="#848284"/><rect x="8" y="9" width="1" height="1" fill="#ffffff"/><rect x="0" y="10" width="1" height="1" fill="#848284"/><rect x="1" y="10" width="1" height="1" fill="#ffffff"/><rect x="3" y="10" width="1" height="1" fill="#848284"/><rect x="4" y="10" width="1" height="1" fill="#ffffff"/><rect x="5" y="10" width="1" height="1" fill="#848284"/><rect x="6" y="10" width="1" height="1" fill="#ffffff"/><rect x="8" y="10" width="1" height="1" fill="#848284"/><rect x="0" y="11" width="1" height="1" fill="#848284"/><rect x="1" y="11" width="1" height="1" fill="#ffffff"/><rect x="3" y="11" width="1" height="1" fill="#848284"/><rect x="4" y="11" width="1" height="1" fill="#ffffff"/><rect x="5" y="11" width="1" height="1" fill="#848284"/><rect x="6" y="11" width="1" height="1" fill="#ffffff"/><rect x="8" y="11" width="1" height="1" fill="#848284"/><rect x="0" y="12" width="1" height="1" fill="#848284"/><rect x="1" y="12" width="1" height="1" fill="#ffffff"/><rect x="3" y="12" width="1" height="1" fill="#848284"/><rect x="4" y="12" width="1" height="1" fill="#ffffff"/><rect x="5" y="12" width="1" height="1" fill="#848284"/><rect x="6" y="12" width="1" height="1" fill="#ffffff"/><rect x="8" y="12" width="1" height="1" fill="#848284"/><rect x="1" y="13" width="3" height="1" fill="#848284"/><rect x="4" y="13" width="1" height="1" fill="#ffffff"/><rect x="6" y="13" width="2" height="1" fill="#848284"/><rect x="8" y="13" width="1" height="1" fill="#ffffff"/><rect x="2" y="14" width="2" height="1" fill="#ffffff"/><rect x="7" y="14" width="1" height="1" fill="#ffffff"/></svg>
<svg style="left:349px;top:48px" width="16" height="13" shape-rendering="crispEdges"><rect x="0" y="0" width="6" height="1" fill="#000080"/><rect x="0" y="1" width="1" height="1" fill="#000080"/><rect x="1" y="1" width="4" height="1" fill="#ffffff"/><rect x="5" y="1" width="2" height="1" fill="#000080"/><rect x="0" y="2" width="1" height="1" fill="#000080"/><rect x="1" y="2" width="1" height="1" fill="#ffffff"/><rect x="2" y="2" width="2" height="1" fill="#000080"/><rect x="4" y="2" width="2" height="1" fill="#ffffff"/><rect x="6" y="2" width="2" height="1" fill="#000080"/><rect x="0" y="3" width="1" height="1" fill="#000080"/><rect x="1" y="3" width="6" height="1" fill="#ffffff"/><rect x="7" y="3" width="6" height="1" fill="#000080"/><rect x="0" y="4" width="1" height="1" fill="#000080"/><rect x="1" y="4" width="1" height="1" fill="#ffffff"/><rect x="2" y="4" width="4" height="1" fill="#000080"/><rect x="6" y="4" width="1" height="1" fill="#ffffff"/><rect x="7" y="4" width="1" height="1" fill="#000080"/><rect x="8" y="4" width="4" height="1" fill="#ffffff"/><rect x="12" y="4" width="2" height="1" fill="#000080"/><rect x="0" y="5" width="1" height="1" fill="#000080"/><rect x="1" y="5" width="6" height="1" fill="#ffffff"/><rect x="7" y="5" width="1" height="1" fill="#000080"/><rect x="8" y="5" width="1" height="1" fill="#ffffff"/><rect x="9" y="5" width="2" height="1" fill="#000080"/><rect x="11" y="5" width="2" height="1" fill="#ffffff"/><rect x="13" y="5" width="2" height="1" fill="#000080"/><rect x="0" y="6" width="1" height="1" fill="#000080"/><rect x="1" y="6" width="1" height="1" fill="#ffffff"/><rect x="2" y="6" width="4" height="1" fill="#000080"/><rect x="6" y="6" width="1" height="1" fill="#ffffff"/><rect x="7" y="6" width="1" height="1" fill="#000080"/><rect x="8" y="6" width="6" height="1" fill="#ffffff"/><rect x="14" y="6" width="1" height="1" fill="#000080"/><rect x="0" y="7" width="1" height="1" fill="#000080"/><rect x="1" y="7" width="6" height="1" fill="#ffffff"/><rect x="7" y="7" width="1" height="1" fill="#000080"/><rect x="8" y="7" width="1" height="1" fill="#ffffff"/><rect x="9" y="7" width="4" height="1" fill="#000080"/><rect x="13" y="7" width="1" height="1" fill="#ffffff"/><rect x="14" y="7" width="1" height="1" fill="#000080"/><rect x="0" y="8" width="1" height="1" fill="#000080"/><rect x="1" y="8" width="6" height="1" fill="#ffffff"/><rect x="7" y="8" width="1" height="1" fill="#000080"/><rect x="8" y="8" width="6" height="1" fill="#ffffff"/><rect x="14" y="8" width="1" height="1" fill="#000080"/><rect x="0" y="9" width="8" height="1" fill="#000080"/><rect x="8" y="9" width="1" height="1" fill="#ffffff"/><rect x="9" y="9" width="4" height="1" fill="#000080"/><rect x="13" y="9" width="1" height="1" fill="#ffffff"/><rect x="14" y="9" width="1" height="1" fill="#000080"/><rect x="7" y="10" width="1" height="1" fill="#000080"/><rect x="8" y="10" width="6" height="1" fill="#ffffff"/><rect x="14" y="10" width="1" height="1" fill="#000080"/><rect x="7" y="11" width="1" height="1" fill="#000080"/><rect x="8" y="11" width="6" height="1" fill="#ffffff"/><rect x="14" y="11" width="1" height="1" fill="#000080"/><rect x="7" y="12" width="8" height="1" fill="#000080"/></svg>
<svg style="left:372px;top:48px" width="16" height="14" shape-rendering="crispEdges"><rect x="4" y="0" width="6" height="1" fill="#848284"/><rect x="1" y="1" width="3" height="1" fill="#848284"/><rect x="4" y="1" width="6" height="1" fill="#ffffff"/><rect x="10" y="1" width="3" height="1" fill="#848284"/><rect x="0" y="2" width="2" height="1" fill="#848284"/><rect x="2" y="2" width="1" height="1" fill="#ffffff"/><rect x="3" y="2" width="8" height="1" fill="#848284"/><rect x="11" y="2" width="1" height="1" fill="#ffffff"/><rect x="12" y="2" width="1" height="1" fill="#848284"/><rect x="13" y="2" width="1" height="1" fill="#ffffff"/><rect x="0" y="3" width="2" height="1" fill="#848284"/><rect x="2" y="3" width="1" height="1" fill="#ffffff"/><rect x="3" y="3" width="9" height="1" fill="#848284"/><rect x="12" y="3" width="2" height="1" fill="#ffffff"/><rect x="0" y="4" width="2" height="1" fill="#848284"/><rect x="2" y="4" width="1" height="1" fill="#ffffff"/><rect x="3" y="4" width="9" height="1" fill="#848284"/><rect x="12" y="4" width="1" height="1" fill="#ffffff"/><rect x="0" y="5" width="2" height="1" fill="#848284"/><rect x="2" y="5" width="1" height="1" fill="#ffffff"/><rect x="3" y="5" width="10" height="1" fill="#848284"/><rect x="13" y="5" width="1" height="1" fill="#ffffff"/><rect x="0" y="6" width="2" height="1" fill="#848284"/><rect x="2" y="6" width="1" height="1" fill="#ffffff"/><rect x="3" y="6" width="5" height="1" fill="#848284"/><rect x="8" y="6" width="5" height="1" fill="#ffffff"/><rect x="13" y="6" width="1" height="1" fill="#848284"/><rect x="14" y="6" width="1" height="1" fill="#ffffff"/><rect x="0" y="7" width="2" height="1" fill="#848284"/><rect x="2" y="7" width="1" height="1" fill="#ffffff"/><rect x="3" y="7" width="12" height="1" fill="#848284"/><rect x="15" y="7" width="1" height="1" fill="#ffffff"/><rect x="0" y="8" width="2" height="1" fill="#848284"/><rect x="2" y="8" width="1" height="1" fill="#ffffff"/><rect x="3" y="8" width="5" height="1" fill="#848284"/><rect x="8" y="8" width="5" height="1" fill="#ffffff"/><rect x="13" y="8" width="2" height="1" fill="#848284"/><rect x="15" y="8" width="1" height="1" fill="#ffffff"/><rect x="0" y="9" width="2" height="1" fill="#848284"/><rect x="2" y="9" width="1" height="1" fill="#ffffff"/><rect x="3" y="9" width="12" height="1" fill="#848284"/><rect x="15" y="9" width="1" height="1" fill="#ffffff"/><rect x="0" y="10" width="2" height="1" fill="#848284"/><rect x="2" y="10" width="1" height="1" fill="#ffffff"/><rect x="3" y="10" width="5" height="1" fill="#848284"/><rect x="8" y="10" width="5" height="1" fill="#ffffff"/><rect x="13" y="10" width="2" height="1" fill="#848284"/><rect x="15" y="10" width="1" height="1" fill="#ffffff"/><rect x="0" y="11" width="14" height="1" fill="#848284"/><rect x="14" y="11" width="1" height="1" fill="#ffffff"/><rect x="1" y="12" width="6" height="1" fill="#ffffff"/><rect x="7" y="12" width="7" height="1" fill="#848284"/><rect x="14" y="12" width="1" height="1" fill="#ffffff"/><rect x="7" y="13" width="8" height="1" fill="#ffffff"/></svg>
<svg style="left:404px;top:49px" width="13" height="11" shape-rendering="crispEdges"><rect x="6" y="0" width="2" height="1" fill="#000000"/><rect x="9" y="0" width="3" height="1" fill="#000000"/><rect x="6" y="1" width="3" height="1" fill="#000000"/><rect x="12" y="1" width="1" height="1" fill="#000000"/><rect x="6" y="2" width="3" height="1" fill="#000000"/><rect x="0" y="3" width="6" height="1" fill="#000000"/><rect x="0" y="4" width="1" height="1" fill="#000000"/><rect x="1" y="4" width="5" height="1" fill="#ffffff"/><rect x="6" y="4" width="7" height="1" fill="#000000"/><rect x="0" y="5" width="1" height="1" fill="#000000"/><rect x="1" y="5" width="11" height="1" fill="#909090"/><rect x="12" y="5" width="1" height="1" fill="#000000"/><rect x="0" y="6" width="1" height="1" fill="#000000"/><rect x="1" y="6" width="11" height="1" fill="#909090"/><rect x="12" y="6" width="1" height="1" fill="#000000"/><rect x="0" y="7" width="1" height="1" fill="#000000"/><rect x="1" y="7" width="1" height="1" fill="#909090"/><rect x="2" y="7" width="4" height="1" fill="#000000"/><rect x="6" y="7" width="6" height="1" fill="#909090"/><rect x="12" y="7" width="1" height="1" fill="#000000"/><rect x="0" y="8" width="1" height="1" fill="#000000"/><rect x="1" y="8" width="11" height="1" fill="#909090"/><rect x="12" y="8" width="1" height="1" fill="#000000"/><rect x="0" y="9" width="1" height="1" fill="#000000"/><rect x="1" y="9" width="11" height="1" fill="#909090"/><rect x="12" y="9" width="1" height="1" fill="#000000"/><rect x="0" y="10" width="13" height="1" fill="#000000"/></svg>
<svg style="left:10px;top:256px" width="14" height="13" shape-rendering="crispEdges"><rect x="2" y="0" width="4" height="1" fill="#000000"/><rect x="1" y="1" width="1" height="1" fill="#000000"/><rect x="2" y="1" width="4" height="1" fill="#ffffff"/><rect x="6" y="1" width="1" height="1" fill="#000000"/><rect x="0" y="2" width="1" height="1" fill="#000000"/><rect x="1" y="2" width="6" height="1" fill="#ffffff"/><rect x="7" y="2" width="1" height="1" fill="#000000"/><rect x="0" y="3" width="1" height="1" fill="#000000"/><rect x="1" y="3" width="2" height="1" fill="#ffffff"/><rect x="3" y="3" width="2" height="1" fill="#000000"/><rect x="5" y="3" width="2" height="1" fill="#ffffff"/><rect x="7" y="3" width="1" height="1" fill="#000000"/><rect x="10" y="3" width="1" height="1" fill="#000080"/><rect x="0" y="4" width="1" height="1" fill="#000000"/><rect x="1" y="4" width="6" height="1" fill="#ffffff"/><rect x="7" y="4" width="1" height="1" fill="#000000"/><rect x="10" y="4" width="1" height="1" fill="#000080"/><rect x="1" y="5" width="1" height="1" fill="#000000"/><rect x="2" y="5" width="4" height="1" fill="#ffffff"/><rect x="6" y="5" width="1" height="1" fill="#000000"/><rect x="10" y="5" width="1" height="1" fill="#000080"/><rect x="0" y="6" width="1" height="1" fill="#000000"/><rect x="2" y="6" width="4" height="1" fill="#000000"/><rect x="7" y="6" width="1" height="1" fill="#000000"/><rect x="10" y="6" width="1" height="1" fill="#000080"/><rect x="0" y="7" width="1" height="1" fill="#000000"/><rect x="1" y="7" width="6" height="1" fill="#ffffff"/><rect x="7" y="7" width="1" height="1" fill="#000000"/><rect x="10" y="7" width="1" height="1" fill="#000080"/><rect x="0" y="8" width="1" height="1" fill="#000000"/><rect x="2" y="8" width="4" height="1" fill="#000000"/><rect x="7" y="8" width="1" height="1" fill="#000000"/><rect x="10" y="8" width="1" height="1" fill="#000080"/><rect x="0" y="9" width="1" height="1" fill="#000000"/><rect x="1" y="9" width="6" height="1" fill="#ffffff"/><rect x="7" y="9" width="1" height="1" fill="#000000"/><rect x="9" y="9" width="5" height="1" fill="#000080"/><rect x="0" y="10" width="1" height="1" fill="#000000"/><rect x="2" y="10" width="4" height="1" fill="#000000"/><rect x="7" y="10" width="1" height="1" fill="#000000"/><rect x="10" y="10" width="3" height="1" fill="#000080"/><rect x="1" y="11" width="1" height="1" fill="#000000"/><rect x="2" y="11" width="4" height="1" fill="#ffffff"/><rect x="6" y="11" width="1" height="1" fill="#000000"/><rect x="10" y="11" width="3" height="1" fill="#000080"/><rect x="2" y="12" width="4" height="1" fill="#000000"/><rect x="11" y="12" width="1" height="1" fill="#000080"/></svg>
<svg style="left:41px;top:256px" width="14" height="13" shape-rendering="crispEdges"><rect x="2" y="0" width="10" height="1" fill="#000000"/><rect x="2" y="1" width="1" height="1" fill="#000000"/><rect x="3" y="1" width="8" height="1" fill="#ffffff"/><rect x="11" y="1" width="1" height="1" fill="#000000"/><rect x="2" y="2" width="1" height="1" fill="#000000"/><rect x="3" y="2" width="1" height="1" fill="#ffffff"/><rect x="4" y="2" width="6" height="1" fill="#000000"/><rect x="10" y="2" width="1" height="1" fill="#ffffff"/><rect x="11" y="2" width="1" height="1" fill="#000000"/><rect x="2" y="3" width="1" height="1" fill="#000000"/><rect x="3" y="3" width="8" height="1" fill="#ffffff"/><rect x="11" y="3" width="1" height="1" fill="#000000"/><rect x="2" y="4" width="1" height="1" fill="#000000"/><rect x="3" y="4" width="7" height="1" fill="#ffffff"/><rect x="10" y="4" width="2" height="1" fill="#d00000"/><rect x="2" y="5" width="1" height="1" fill="#000000"/><rect x="3" y="5" width="1" height="1" fill="#ffffff"/><rect x="4" y="5" width="2" height="1" fill="#000080"/><rect x="6" y="5" width="3" height="1" fill="#ffffff"/><rect x="9" y="5" width="4" height="1" fill="#d00000"/><rect x="0" y="6" width="7" height="1" fill="#000080"/><rect x="7" y="6" width="1" height="1" fill="#ffffff"/><rect x="8" y="6" width="4" height="1" fill="#d00000"/><rect x="0" y="7" width="8" height="1" fill="#000080"/><rect x="8" y="7" width="3" height="1" fill="#d00000"/><rect x="2" y="8" width="1" height="1" fill="#000000"/><rect x="3" y="8" width="1" height="1" fill="#ffffff"/><rect x="4" y="8" width="2" height="1" fill="#000080"/><rect x="6" y="8" width="1" height="1" fill="#ffffff"/><rect x="7" y="8" width="5" height="1" fill="#d00000"/><rect x="2" y="9" width="1" height="1" fill="#000000"/><rect x="3" y="9" width="3" height="1" fill="#ffffff"/><rect x="6" y="9" width="3" height="1" fill="#d00000"/><rect x="9" y="9" width="1" height="1" fill="#ffffff"/><rect x="10" y="9" width="3" height="1" fill="#d00000"/><rect x="2" y="10" width="1" height="1" fill="#000000"/><rect x="3" y="10" width="4" height="1" fill="#ffffff"/><rect x="7" y="10" width="1" height="1" fill="#d00000"/><rect x="8" y="10" width="3" height="1" fill="#ffffff"/><rect x="11" y="10" width="1" height="1" fill="#d00000"/><rect x="2" y="11" width="1" height="1" fill="#000000"/><rect x="3" y="11" width="8" height="1" fill="#ffffff"/><rect x="11" y="11" width="1" height="1" fill="#000000"/><rect x="2" y="12" width="10" height="1" fill="#000000"/></svg>
<svg style="left:65px;top:257px" width="14" height="13" shape-rendering="crispEdges"><rect x="3" y="0" width="11" height="1" fill="#000000"/><rect x="3" y="1" width="1" height="1" fill="#000000"/><rect x="4" y="1" width="9" height="1" fill="#ffffff"/><rect x="13" y="1" width="1" height="1" fill="#000000"/><rect x="3" y="2" width="1" height="1" fill="#000000"/><rect x="4" y="2" width="6" height="1" fill="#ffffff"/><rect x="10" y="2" width="2" height="1" fill="#000000"/><rect x="12" y="2" width="1" height="1" fill="#ffffff"/><rect x="13" y="2" width="1" height="1" fill="#000000"/><rect x="2" y="3" width="5" height="1" fill="#000080"/><rect x="7" y="3" width="6" height="1" fill="#ffffff"/><rect x="13" y="3" width="1" height="1" fill="#000000"/><rect x="1" y="4" width="2" height="1" fill="#000080"/><rect x="3" y="4" width="3" height="1" fill="#ffffff"/><rect x="6" y="4" width="2" height="1" fill="#000080"/><rect x="8" y="4" width="1" height="1" fill="#ffffff"/><rect x="9" y="4" width="3" height="1" fill="#000000"/><rect x="12" y="4" width="1" height="1" fill="#ffffff"/><rect x="13" y="4" width="1" height="1" fill="#000000"/><rect x="0" y="5" width="2" height="1" fill="#000080"/><rect x="2" y="5" width="1" height="1" fill="#ffffff"/><rect x="3" y="5" width="3" height="1" fill="#000080"/><rect x="6" y="5" width="1" height="1" fill="#ffffff"/><rect x="7" y="5" width="2" height="1" fill="#000080"/><rect x="9" y="5" width="4" height="1" fill="#ffffff"/><rect x="13" y="5" width="1" height="1" fill="#000000"/><rect x="0" y="6" width="1" height="1" fill="#000080"/><rect x="1" y="6" width="2" height="1" fill="#ffffff"/><rect x="3" y="6" width="1" height="1" fill="#000080"/><rect x="4" y="6" width="2" height="1" fill="#ffffff"/><rect x="6" y="6" width="2" height="1" fill="#000080"/><rect x="8" y="6" width="1" height="1" fill="#ffffff"/><rect x="9" y="6" width="3" height="1" fill="#000000"/><rect x="12" y="6" width="1" height="1" fill="#ffffff"/><rect x="13" y="6" width="1" height="1" fill="#000000"/><rect x="0" y="7" width="1" height="1" fill="#000080"/><rect x="1" y="7" width="2" height="1" fill="#ffffff"/><rect x="3" y="7" width="6" height="1" fill="#000080"/><rect x="9" y="7" width="4" height="1" fill="#ffffff"/><rect x="13" y="7" width="1" height="1" fill="#000000"/><rect x="0" y="8" width="2" height="1" fill="#000080"/><rect x="2" y="8" width="5" height="1" fill="#ffffff"/><rect x="7" y="8" width="2" height="1" fill="#000080"/><rect x="9" y="8" width="1" height="1" fill="#ffffff"/><rect x="10" y="8" width="2" height="1" fill="#000000"/><rect x="12" y="8" width="1" height="1" fill="#ffffff"/><rect x="13" y="8" width="1" height="1" fill="#000000"/><rect x="1" y="9" width="2" height="1" fill="#000080"/><rect x="3" y="9" width="3" height="1" fill="#ffffff"/><rect x="6" y="9" width="2" height="1" fill="#000080"/><rect x="8" y="9" width="5" height="1" fill="#ffffff"/><rect x="13" y="9" width="1" height="1" fill="#000000"/><rect x="2" y="10" width="5" height="1" fill="#000080"/><rect x="7" y="10" width="3" height="1" fill="#ffffff"/><rect x="10" y="10" width="2" height="1" fill="#000000"/><rect x="12" y="10" width="1" height="1" fill="#ffffff"/><rect x="13" y="10" width="1" height="1" fill="#000000"/><rect x="3" y="11" width="1" height="1" fill="#000000"/><rect x="4" y="11" width="9" height="1" fill="#ffffff"/><rect x="13" y="11" width="1" height="1" fill="#000000"/><rect x="3" y="12" width="11" height="1" fill="#000000"/></svg>
<svg style="left:86px;top:255px" width="17" height="15" shape-rendering="crispEdges"><rect x="2" y="0" width="3" height="1" fill="#000000"/><rect x="2" y="1" width="1" height="1" fill="#000000"/><rect x="3" y="1" width="1" height="1" fill="#00c0c0"/><rect x="4" y="1" width="1" height="1" fill="#000000"/><rect x="0" y="2" width="3" height="1" fill="#000000"/><rect x="3" y="2" width="1" height="1" fill="#00c0c0"/><rect x="4" y="2" width="3" height="1" fill="#000000"/><rect x="0" y="3" width="1" height="1" fill="#000000"/><rect x="1" y="3" width="5" height="1" fill="#00c0c0"/><rect x="6" y="3" width="1" height="1" fill="#000000"/><rect x="0" y="4" width="3" height="1" fill="#000000"/><rect x="3" y="4" width="1" height="1" fill="#00c0c0"/><rect x="4" y="4" width="3" height="1" fill="#000000"/><rect x="2" y="5" width="1" height="1" fill="#000000"/><rect x="3" y="5" width="1" height="1" fill="#00c0c0"/><rect x="4" y="5" width="1" height="1" fill="#000000"/><rect x="2" y="6" width="3" height="1" fill="#000000"/><rect x="7" y="6" width="10" height="1" fill="#000000"/><rect x="7" y="7" width="1" height="1" fill="#000000"/><rect x="8" y="7" width="1" height="1" fill="#ffffff"/><rect x="9" y="7" width="1" height="1" fill="#000000"/><rect x="10" y="7" width="1" height="1" fill="#ffffff"/><rect x="11" y="7" width="1" height="1" fill="#000000"/><rect x="12" y="7" width="1" height="1" fill="#ffffff"/><rect x="13" y="7" width="1" height="1" fill="#000000"/><rect x="14" y="7" width="1" height="1" fill="#ffffff"/><rect x="15" y="7" width="2" height="1" fill="#000000"/><rect x="7" y="8" width="10" height="1" fill="#000000"/><rect x="7" y="9" width="1" height="1" fill="#000000"/><rect x="8" y="9" width="8" height="1" fill="#ffffff"/><rect x="16" y="9" width="1" height="1" fill="#000000"/><rect x="7" y="10" width="1" height="1" fill="#000000"/><rect x="8" y="10" width="8" height="1" fill="#ffffff"/><rect x="16" y="10" width="1" height="1" fill="#000000"/><rect x="7" y="11" width="1" height="1" fill="#000000"/><rect x="8" y="11" width="8" height="1" fill="#ffffff"/><rect x="16" y="11" width="1" height="1" fill="#000000"/><rect x="7" y="12" width="1" height="1" fill="#000000"/><rect x="8" y="12" width="8" height="1" fill="#ffffff"/><rect x="16" y="12" width="1" height="1" fill="#000000"/><rect x="7" y="13" width="1" height="1" fill="#000000"/><rect x="8" y="13" width="8" height="1" fill="#ffffff"/><rect x="16" y="13" width="1" height="1" fill="#000000"/><rect x="7" y="14" width="10" height="1" fill="#000000"/></svg>
<svg style="left:119px;top:256px" width="16" height="15" shape-rendering="crispEdges"><rect x="6" y="0" width="1" height="1" fill="#606000"/><rect x="8" y="0" width="1" height="1" fill="#606000"/><rect x="10" y="0" width="1" height="1" fill="#606000"/><rect x="12" y="0" width="1" height="1" fill="#606000"/><rect x="5" y="1" width="1" height="1" fill="#606000"/><rect x="6" y="1" width="8" height="1" fill="#000000"/><rect x="4" y="2" width="2" height="1" fill="#000000"/><rect x="6" y="2" width="2" height="1" fill="#ffffff"/><rect x="8" y="2" width="3" height="1" fill="#000000"/><rect x="11" y="2" width="2" height="1" fill="#ffffff"/><rect x="13" y="2" width="2" height="1" fill="#000000"/><rect x="4" y="3" width="1" height="1" fill="#000000"/><rect x="5" y="3" width="2" height="1" fill="#ffffff"/><rect x="7" y="3" width="5" height="1" fill="#000000"/><rect x="12" y="3" width="1" height="1" fill="#ffffff"/><rect x="13" y="3" width="1" height="1" fill="#000000"/><rect x="5" y="4" width="2" height="1" fill="#000000"/><rect x="7" y="4" width="2" height="1" fill="#ffffff"/><rect x="9" y="4" width="1" height="1" fill="#000000"/><rect x="10" y="4" width="2" height="1" fill="#ffffff"/><rect x="12" y="4" width="2" height="1" fill="#000000"/><rect x="7" y="5" width="4" height="1" fill="#000000"/><rect x="2" y="7" width="2" height="1" fill="#000000"/><rect x="1" y="8" width="1" height="1" fill="#000000"/><rect x="7" y="8" width="1" height="1" fill="#000000"/><rect x="12" y="8" width="1" height="1" fill="#000000"/><rect x="1" y="9" width="1" height="1" fill="#000000"/><rect x="6" y="9" width="1" height="1" fill="#000000"/><rect x="8" y="9" width="1" height="1" fill="#000000"/><rect x="11" y="9" width="1" height="1" fill="#000000"/><rect x="13" y="9" width="1" height="1" fill="#000000"/><rect x="0" y="10" width="4" height="1" fill="#000000"/><rect x="5" y="10" width="1" height="1" fill="#000000"/><rect x="9" y="10" width="2" height="1" fill="#000000"/><rect x="14" y="10" width="1" height="1" fill="#000000"/><rect x="1" y="11" width="1" height="1" fill="#000000"/><rect x="5" y="11" width="1" height="1" fill="#000000"/><rect x="9" y="11" width="2" height="1" fill="#000000"/><rect x="14" y="11" width="1" height="1" fill="#000000"/><rect x="1" y="12" width="1" height="1" fill="#000000"/><rect x="5" y="12" width="1" height="1" fill="#000000"/><rect x="8" y="12" width="1" height="1" fill="#000000"/><rect x="11" y="12" width="1" height="1" fill="#000000"/><rect x="13" y="12" width="1" height="1" fill="#000000"/><rect x="1" y="13" width="1" height="1" fill="#000000"/><rect x="6" y="13" width="1" height="1" fill="#000000"/><rect x="8" y="13" width="1" height="1" fill="#000000"/><rect x="11" y="13" width="1" height="1" fill="#000000"/><rect x="13" y="13" width="1" height="1" fill="#000000"/><rect x="0" y="14" width="2" height="1" fill="#000000"/><rect x="7" y="14" width="1" height="1" fill="#000000"/><rect x="12" y="14" width="1" height="1" fill="#000000"/></svg>
<svg style="left:141px;top:256px" width="17" height="15" shape-rendering="crispEdges"><rect x="4" y="0" width="1" height="1" fill="#606000"/><rect x="6" y="0" width="1" height="1" fill="#606000"/><rect x="8" y="0" width="1" height="1" fill="#606000"/><rect x="10" y="0" width="1" height="1" fill="#606000"/><rect x="3" y="1" width="1" height="1" fill="#606000"/><rect x="4" y="1" width="8" height="1" fill="#000000"/><rect x="2" y="2" width="2" height="1" fill="#000000"/><rect x="4" y="2" width="2" height="1" fill="#ffffff"/><rect x="6" y="2" width="3" height="1" fill="#000000"/><rect x="9" y="2" width="2" height="1" fill="#ffffff"/><rect x="11" y="2" width="2" height="1" fill="#000000"/><rect x="2" y="3" width="1" height="1" fill="#000000"/><rect x="3" y="3" width="2" height="1" fill="#ffffff"/><rect x="5" y="3" width="5" height="1" fill="#000000"/><rect x="10" y="3" width="1" height="1" fill="#ffffff"/><rect x="11" y="3" width="1" height="1" fill="#000000"/><rect x="3" y="4" width="2" height="1" fill="#000000"/><rect x="5" y="4" width="2" height="1" fill="#ffffff"/><rect x="7" y="4" width="1" height="1" fill="#000000"/><rect x="8" y="4" width="2" height="1" fill="#ffffff"/><rect x="10" y="4" width="2" height="1" fill="#000000"/><rect x="5" y="5" width="4" height="1" fill="#000000"/><rect x="0" y="7" width="10" height="1" fill="#000080"/><rect x="0" y="8" width="16" height="1" fill="#000080"/><rect x="0" y="9" width="1" height="1" fill="#000000"/><rect x="1" y="9" width="4" height="1" fill="#ffffff"/><rect x="5" y="9" width="1" height="1" fill="#000000"/><rect x="6" y="9" width="4" height="1" fill="#ffffff"/><rect x="10" y="9" width="1" height="1" fill="#000000"/><rect x="11" y="9" width="4" height="1" fill="#ffffff"/><rect x="15" y="9" width="1" height="1" fill="#000000"/><rect x="0" y="10" width="16" height="1" fill="#000000"/><rect x="0" y="11" width="1" height="1" fill="#000000"/><rect x="1" y="11" width="1" height="1" fill="#ffffff"/><rect x="2" y="11" width="1" height="1" fill="#000000"/><rect x="3" y="11" width="1" height="1" fill="#ffffff"/><rect x="4" y="11" width="1" height="1" fill="#000000"/><rect x="5" y="11" width="1" height="1" fill="#ffffff"/><rect x="6" y="11" width="1" height="1" fill="#000000"/><rect x="7" y="11" width="1" height="1" fill="#ffffff"/><rect x="8" y="11" width="1" height="1" fill="#000000"/><rect x="9" y="11" width="1" height="1" fill="#ffffff"/><rect x="10" y="11" width="1" height="1" fill="#000000"/><rect x="11" y="11" width="1" height="1" fill="#ffffff"/><rect x="12" y="11" width="1" height="1" fill="#000000"/><rect x="13" y="11" width="1" height="1" fill="#ffffff"/><rect x="14" y="11" width="2" height="1" fill="#000000"/><rect x="0" y="12" width="1" height="1" fill="#000000"/><rect x="1" y="12" width="2" height="1" fill="#ffffff"/><rect x="3" y="12" width="1" height="1" fill="#000000"/><rect x="4" y="12" width="2" height="1" fill="#ffffff"/><rect x="6" y="12" width="1" height="1" fill="#000000"/><rect x="7" y="12" width="2" height="1" fill="#ffffff"/><rect x="9" y="12" width="1" height="1" fill="#000000"/><rect x="10" y="12" width="2" height="1" fill="#ffffff"/><rect x="12" y="12" width="1" height="1" fill="#000000"/><rect x="13" y="12" width="2" height="1" fill="#ffffff"/><rect x="15" y="12" width="1" height="1" fill="#000000"/><rect x="0" y="13" width="16" height="1" fill="#000000"/></svg>
<svg style="left:164px;top:256px" width="15" height="15" shape-rendering="crispEdges"><rect x="2" y="0" width="1" height="1" fill="#606000"/><rect x="4" y="0" width="1" height="1" fill="#606000"/><rect x="6" y="0" width="1" height="1" fill="#606000"/><rect x="8" y="0" width="1" height="1" fill="#606000"/><rect x="1" y="1" width="1" height="1" fill="#606000"/><rect x="2" y="1" width="8" height="1" fill="#000000"/><rect x="0" y="2" width="2" height="1" fill="#000000"/><rect x="2" y="2" width="2" height="1" fill="#ffffff"/><rect x="4" y="2" width="3" height="1" fill="#000000"/><rect x="7" y="2" width="2" height="1" fill="#ffffff"/><rect x="9" y="2" width="2" height="1" fill="#000000"/><rect x="0" y="3" width="1" height="1" fill="#000000"/><rect x="1" y="3" width="2" height="1" fill="#ffffff"/><rect x="3" y="3" width="5" height="1" fill="#000000"/><rect x="8" y="3" width="1" height="1" fill="#ffffff"/><rect x="9" y="3" width="1" height="1" fill="#000000"/><rect x="1" y="4" width="2" height="1" fill="#000000"/><rect x="3" y="4" width="2" height="1" fill="#ffffff"/><rect x="5" y="4" width="1" height="1" fill="#000000"/><rect x="6" y="4" width="2" height="1" fill="#ffffff"/><rect x="8" y="4" width="2" height="1" fill="#000000"/><rect x="3" y="5" width="4" height="1" fill="#000000"/><rect x="11" y="6" width="1" height="1" fill="#000080"/><rect x="10" y="7" width="3" height="1" fill="#000080"/><rect x="9" y="8" width="5" height="1" fill="#000080"/><rect x="8" y="9" width="7" height="1" fill="#000080"/><rect x="9" y="11" width="5" height="1" fill="#000080"/><rect x="9" y="13" width="5" height="1" fill="#000080"/><rect x="9" y="14" width="5" height="1" fill="#000080"/></svg>
<svg style="left:187px;top:256px" width="15" height="13" shape-rendering="crispEdges"><rect x="0" y="0" width="13" height="1" fill="#000000"/><rect x="1" y="1" width="1" height="1" fill="#000000"/><rect x="2" y="1" width="9" height="1" fill="#ffffff"/><rect x="11" y="1" width="1" height="1" fill="#000000"/><rect x="2" y="2" width="1" height="1" fill="#000000"/><rect x="3" y="2" width="2" height="1" fill="#ffffff"/><rect x="5" y="2" width="2" height="1" fill="#f4f4d8"/><rect x="7" y="2" width="3" height="1" fill="#ffffff"/><rect x="10" y="2" width="1" height="1" fill="#000000"/><rect x="3" y="3" width="2" height="1" fill="#000000"/><rect x="5" y="3" width="3" height="1" fill="#ffffff"/><rect x="8" y="3" width="2" height="1" fill="#000000"/><rect x="4" y="4" width="1" height="1" fill="#000000"/><rect x="5" y="4" width="3" height="1" fill="#ffffff"/><rect x="8" y="4" width="1" height="1" fill="#000000"/><rect x="4" y="5" width="5" height="1" fill="#000000"/><rect x="1" y="8" width="1" height="1" fill="#000080"/><rect x="4" y="8" width="3" height="1" fill="#000080"/><rect x="9" y="8" width="3" height="1" fill="#000080"/><rect x="14" y="8" width="1" height="1" fill="#000080"/><rect x="0" y="9" width="2" height="1" fill="#000080"/><rect x="7" y="9" width="1" height="1" fill="#000080"/><rect x="12" y="9" width="1" height="1" fill="#000080"/><rect x="14" y="9" width="1" height="1" fill="#000080"/><rect x="1" y="10" width="1" height="1" fill="#000080"/><rect x="5" y="10" width="2" height="1" fill="#000080"/><rect x="10" y="10" width="2" height="1" fill="#000080"/><rect x="14" y="10" width="1" height="1" fill="#000080"/><rect x="1" y="11" width="1" height="1" fill="#000080"/><rect x="4" y="11" width="1" height="1" fill="#000080"/><rect x="12" y="11" width="1" height="1" fill="#000080"/><rect x="1" y="12" width="1" height="1" fill="#000080"/><rect x="4" y="12" width="4" height="1" fill="#000080"/><rect x="9" y="12" width="3" height="1" fill="#000080"/><rect x="14" y="12" width="1" height="1" fill="#000080"/></svg>
<svg style="left:218px;top:257px" width="17" height="13" shape-rendering="crispEdges"><rect x="0" y="0" width="12" height="1" fill="#000000"/><rect x="0" y="1" width="1" height="1" fill="#000000"/><rect x="1" y="1" width="10" height="1" fill="#ffffff"/><rect x="11" y="1" width="1" height="1" fill="#000000"/><rect x="16" y="1" width="1" height="1" fill="#000080"/><rect x="0" y="2" width="1" height="1" fill="#000000"/><rect x="1" y="2" width="1" height="1" fill="#ffffff"/><rect x="2" y="2" width="6" height="1" fill="#000000"/><rect x="8" y="2" width="2" height="1" fill="#ffffff"/><rect x="10" y="2" width="1" height="1" fill="#000000"/><rect x="15" y="2" width="2" height="1" fill="#000080"/><rect x="0" y="3" width="1" height="1" fill="#000000"/><rect x="1" y="3" width="9" height="1" fill="#ffffff"/><rect x="10" y="3" width="1" height="1" fill="#000000"/><rect x="14" y="3" width="3" height="1" fill="#000080"/><rect x="0" y="4" width="1" height="1" fill="#000000"/><rect x="1" y="4" width="2" height="1" fill="#ffffff"/><rect x="3" y="4" width="4" height="1" fill="#000000"/><rect x="7" y="4" width="3" height="1" fill="#ffffff"/><rect x="10" y="4" width="1" height="1" fill="#000000"/><rect x="13" y="4" width="3" height="1" fill="#000080"/><rect x="0" y="5" width="1" height="1" fill="#000000"/><rect x="1" y="5" width="2" height="1" fill="#ffffff"/><rect x="3" y="5" width="1" height="1" fill="#000000"/><rect x="4" y="5" width="2" height="1" fill="#000080"/><rect x="6" y="5" width="1" height="1" fill="#000000"/><rect x="7" y="5" width="3" height="1" fill="#ffffff"/><rect x="10" y="5" width="1" height="1" fill="#000000"/><rect x="12" y="5" width="3" height="1" fill="#000080"/><rect x="0" y="6" width="1" height="1" fill="#000000"/><rect x="1" y="6" width="2" height="1" fill="#ffffff"/><rect x="3" y="6" width="1" height="1" fill="#000000"/><rect x="4" y="6" width="2" height="1" fill="#000080"/><rect x="6" y="6" width="1" height="1" fill="#000000"/><rect x="7" y="6" width="3" height="1" fill="#ffffff"/><rect x="10" y="6" width="1" height="1" fill="#000000"/><rect x="11" y="6" width="3" height="1" fill="#000080"/><rect x="0" y="7" width="1" height="1" fill="#000000"/><rect x="1" y="7" width="2" height="1" fill="#ffffff"/><rect x="3" y="7" width="4" height="1" fill="#000000"/><rect x="7" y="7" width="2" height="1" fill="#ffffff"/><rect x="9" y="7" width="1" height="1" fill="#000000"/><rect x="10" y="7" width="3" height="1" fill="#000080"/><rect x="0" y="8" width="1" height="1" fill="#000000"/><rect x="1" y="8" width="8" height="1" fill="#ffffff"/><rect x="9" y="8" width="1" height="1" fill="#000000"/><rect x="10" y="8" width="1" height="1" fill="#f0f000"/><rect x="11" y="8" width="1" height="1" fill="#000080"/><rect x="0" y="9" width="1" height="1" fill="#000000"/><rect x="1" y="9" width="1" height="1" fill="#ffffff"/><rect x="2" y="9" width="7" height="1" fill="#000000"/><rect x="9" y="9" width="2" height="1" fill="#f0f000"/><rect x="11" y="9" width="1" height="1" fill="#000000"/><rect x="0" y="10" width="1" height="1" fill="#000000"/><rect x="1" y="10" width="11" height="1" fill="#ffffff"/><rect x="0" y="11" width="1" height="1" fill="#000000"/><rect x="1" y="11" width="1" height="1" fill="#ffffff"/><rect x="2" y="11" width="6" height="1" fill="#000000"/><rect x="8" y="11" width="4" height="1" fill="#ffffff"/><rect x="0" y="12" width="12" height="1" fill="#000000"/></svg>
<svg style="left:250px;top:256px" width="14" height="14" shape-rendering="crispEdges"><rect x="0" y="0" width="13" height="1" fill="#848284"/><rect x="0" y="1" width="3" height="1" fill="#848284"/><rect x="3" y="1" width="7" height="1" fill="#ffffff"/><rect x="10" y="1" width="3" height="1" fill="#848284"/><rect x="0" y="2" width="3" height="1" fill="#848284"/><rect x="3" y="2" width="1" height="1" fill="#ffffff"/><rect x="4" y="2" width="5" height="1" fill="#d8d6d8"/><rect x="9" y="2" width="1" height="1" fill="#ffffff"/><rect x="10" y="2" width="3" height="1" fill="#848284"/><rect x="0" y="3" width="3" height="1" fill="#848284"/><rect x="3" y="3" width="7" height="1" fill="#ffffff"/><rect x="10" y="3" width="3" height="1" fill="#848284"/><rect x="0" y="4" width="3" height="1" fill="#848284"/><rect x="3" y="4" width="1" height="1" fill="#ffffff"/><rect x="4" y="4" width="5" height="1" fill="#d8d6d8"/><rect x="9" y="4" width="1" height="1" fill="#ffffff"/><rect x="10" y="4" width="3" height="1" fill="#848284"/><rect x="0" y="5" width="3" height="1" fill="#848284"/><rect x="3" y="5" width="7" height="1" fill="#ffffff"/><rect x="10" y="5" width="3" height="1" fill="#848284"/><rect x="0" y="6" width="13" height="1" fill="#848284"/><rect x="0" y="7" width="13" height="1" fill="#848284"/><rect x="0" y="8" width="13" height="1" fill="#848284"/><rect x="0" y="9" width="8" height="1" fill="#848284"/><rect x="8" y="9" width="2" height="1" fill="#ffffff"/><rect x="10" y="9" width="3" height="1" fill="#848284"/><rect x="0" y="10" width="8" height="1" fill="#848284"/><rect x="8" y="10" width="2" height="1" fill="#ffffff"/><rect x="10" y="10" width="3" height="1" fill="#848284"/><rect x="0" y="11" width="8" height="1" fill="#848284"/><rect x="8" y="11" width="2" height="1" fill="#ffffff"/><rect x="10" y="11" width="3" height="1" fill="#848284"/><rect x="0" y="12" width="13" height="1" fill="#848284"/><rect x="1" y="13" width="13" height="1" fill="#ffffff"/></svg>
<svg style="left:271px;top:256px" width="19" height="13" shape-rendering="crispEdges"><rect x="0" y="0" width="12" height="1" fill="#000000"/><rect x="0" y="1" width="1" height="1" fill="#000000"/><rect x="1" y="1" width="1" height="1" fill="#808000"/><rect x="2" y="1" width="1" height="1" fill="#000000"/><rect x="3" y="1" width="5" height="1" fill="#ffffff"/><rect x="8" y="1" width="1" height="1" fill="#000000"/><rect x="10" y="1" width="1" height="1" fill="#000000"/><rect x="11" y="1" width="1" height="1" fill="#808000"/><rect x="12" y="1" width="1" height="1" fill="#000000"/><rect x="0" y="2" width="1" height="1" fill="#000000"/><rect x="1" y="2" width="1" height="1" fill="#808000"/><rect x="2" y="2" width="1" height="1" fill="#000000"/><rect x="3" y="2" width="1" height="1" fill="#ffffff"/><rect x="4" y="2" width="3" height="1" fill="#000000"/><rect x="7" y="2" width="1" height="1" fill="#ffffff"/><rect x="8" y="2" width="1" height="1" fill="#000000"/><rect x="10" y="2" width="1" height="1" fill="#000000"/><rect x="11" y="2" width="1" height="1" fill="#808000"/><rect x="12" y="2" width="1" height="1" fill="#000000"/><rect x="0" y="3" width="1" height="1" fill="#000000"/><rect x="1" y="3" width="1" height="1" fill="#808000"/><rect x="2" y="3" width="1" height="1" fill="#000000"/><rect x="3" y="3" width="4" height="1" fill="#ffffff"/><rect x="7" y="3" width="11" height="1" fill="#000000"/><rect x="0" y="4" width="1" height="1" fill="#000000"/><rect x="1" y="4" width="1" height="1" fill="#808000"/><rect x="2" y="4" width="1" height="1" fill="#000000"/><rect x="3" y="4" width="1" height="1" fill="#ffffff"/><rect x="4" y="4" width="2" height="1" fill="#000000"/><rect x="6" y="4" width="1" height="1" fill="#ffffff"/><rect x="7" y="4" width="1" height="1" fill="#000000"/><rect x="8" y="4" width="1" height="1" fill="#808000"/><rect x="9" y="4" width="1" height="1" fill="#000000"/><rect x="10" y="4" width="5" height="1" fill="#ffffff"/><rect x="15" y="4" width="1" height="1" fill="#000000"/><rect x="16" y="4" width="1" height="1" fill="#808000"/><rect x="17" y="4" width="1" height="1" fill="#000000"/><rect x="0" y="5" width="1" height="1" fill="#000000"/><rect x="1" y="5" width="1" height="1" fill="#808000"/><rect x="2" y="5" width="1" height="1" fill="#000000"/><rect x="3" y="5" width="2" height="1" fill="#ffffff"/><rect x="5" y="5" width="1" height="1" fill="#000000"/><rect x="6" y="5" width="1" height="1" fill="#808000"/><rect x="7" y="5" width="1" height="1" fill="#000000"/><rect x="8" y="5" width="1" height="1" fill="#808000"/><rect x="9" y="5" width="1" height="1" fill="#000000"/><rect x="10" y="5" width="1" height="1" fill="#ffffff"/><rect x="11" y="5" width="3" height="1" fill="#000000"/><rect x="14" y="5" width="1" height="1" fill="#ffffff"/><rect x="15" y="5" width="1" height="1" fill="#000000"/><rect x="16" y="5" width="1" height="1" fill="#808000"/><rect x="17" y="5" width="1" height="1" fill="#000000"/><rect x="0" y="6" width="1" height="1" fill="#000000"/><rect x="1" y="6" width="1" height="1" fill="#808000"/><rect x="2" y="6" width="4" height="1" fill="#000000"/><rect x="6" y="6" width="1" height="1" fill="#808000"/><rect x="7" y="6" width="1" height="1" fill="#000000"/><rect x="8" y="6" width="1" height="1" fill="#808000"/><rect x="9" y="6" width="1" height="1" fill="#000000"/><rect x="10" y="6" width="5" height="1" fill="#ffffff"/><rect x="15" y="6" width="1" height="1" fill="#000000"/><rect x="16" y="6" width="1" height="1" fill="#808000"/><rect x="17" y="6" width="1" height="1" fill="#000000"/><rect x="0" y="7" width="1" height="1" fill="#000000"/><rect x="1" y="7" width="6" height="1" fill="#808000"/><rect x="7" y="7" width="1" height="1" fill="#000000"/><rect x="8" y="7" width="1" height="1" fill="#808000"/><rect x="9" y="7" width="7" height="1" fill="#000000"/><rect x="16" y="7" width="1" height="1" fill="#808000"/><rect x="17" y="7" width="1" height="1" fill="#000000"/><rect x="0" y="8" width="1" height="1" fill="#000000"/><rect x="1" y="8" width="1" height="1" fill="#808000"/><rect x="2" y="8" width="4" height="1" fill="#000000"/><rect x="6" y="8" width="1" height="1" fill="#808000"/><rect x="7" y="8" width="1" height="1" fill="#000000"/><rect x="8" y="8" width="9" height="1" fill="#808000"/><rect x="17" y="8" width="1" height="1" fill="#000000"/><rect x="0" y="9" width="1" height="1" fill="#000000"/><rect x="1" y="9" width="1" height="1" fill="#808000"/><rect x="2" y="9" width="1" height="1" fill="#000000"/><rect x="3" y="9" width="2" height="1" fill="#ffffff"/><rect x="5" y="9" width="1" height="1" fill="#000000"/><rect x="6" y="9" width="1" height="1" fill="#808000"/><rect x="7" y="9" width="1" height="1" fill="#000000"/><rect x="8" y="9" width="1" height="1" fill="#808000"/><rect x="9" y="9" width="6" height="1" fill="#000000"/><rect x="15" y="9" width="2" height="1" fill="#808000"/><rect x="17" y="9" width="1" height="1" fill="#000000"/><rect x="0" y="10" width="9" height="1" fill="#000000"/><rect x="9" y="10" width="1" height="1" fill="#808000"/><rect x="10" y="10" width="1" height="1" fill="#000000"/><rect x="11" y="10" width="2" height="1" fill="#ffffff"/><rect x="13" y="10" width="1" height="1" fill="#000000"/><rect x="14" y="10" width="1" height="1" fill="#808000"/><rect x="15" y="10" width="1" height="1" fill="#000000"/><rect x="16" y="10" width="1" height="1" fill="#808000"/><rect x="17" y="10" width="1" height="1" fill="#000000"/><rect x="5" y="11" width="5" height="1" fill="#000000"/><rect x="10" y="11" width="1" height="1" fill="#808000"/><rect x="11" y="11" width="1" height="1" fill="#000000"/><rect x="12" y="11" width="2" height="1" fill="#ffffff"/><rect x="14" y="11" width="1" height="1" fill="#000000"/><rect x="15" y="11" width="1" height="1" fill="#808000"/><rect x="16" y="11" width="1" height="1" fill="#000000"/><rect x="17" y="11" width="1" height="1" fill="#808000"/><rect x="18" y="11" width="1" height="1" fill="#000000"/><rect x="8" y="12" width="10" height="1" fill="#000000"/></svg>
<svg style="left:305px;top:256px" width="9" height="15" shape-rendering="crispEdges"><rect x="1" y="0" width="2" height="1" fill="#848284"/><rect x="5" y="0" width="2" height="1" fill="#848284"/><rect x="1" y="1" width="2" height="1" fill="#848284"/><rect x="5" y="1" width="2" height="1" fill="#848284"/><rect x="1" y="2" width="2" height="1" fill="#848284"/><rect x="3" y="2" width="1" height="1" fill="#ffffff"/><rect x="5" y="2" width="2" height="1" fill="#848284"/><rect x="7" y="2" width="1" height="1" fill="#ffffff"/><rect x="2" y="3" width="1" height="1" fill="#848284"/><rect x="3" y="3" width="1" height="1" fill="#ffffff"/><rect x="4" y="3" width="2" height="1" fill="#848284"/><rect x="6" y="3" width="1" height="1" fill="#ffffff"/><rect x="2" y="4" width="4" height="1" fill="#848284"/><rect x="6" y="4" width="1" height="1" fill="#ffffff"/><rect x="3" y="5" width="2" height="1" fill="#848284"/><rect x="5" y="5" width="1" height="1" fill="#ffffff"/><rect x="3" y="6" width="2" height="1" fill="#848284"/><rect x="5" y="6" width="1" height="1" fill="#ffffff"/><rect x="2" y="7" width="4" height="1" fill="#848284"/><rect x="6" y="7" width="1" height="1" fill="#ffffff"/><rect x="2" y="8" width="1" height="1" fill="#848284"/><rect x="3" y="8" width="1" height="1" fill="#ffffff"/><rect x="5" y="8" width="2" height="1" fill="#848284"/><rect x="7" y="8" width="1" height="1" fill="#ffffff"/><rect x="1" y="9" width="3" height="1" fill="#848284"/><rect x="4" y="9" width="1" height="1" fill="#ffffff"/><rect x="5" y="9" width="3" height="1" fill="#848284"/><rect x="8" y="9" width="1" height="1" fill="#ffffff"/><rect x="0" y="10" width="1" height="1" fill="#848284"/><rect x="1" y="10" width="1" height="1" fill="#ffffff"/><rect x="3" y="10" width="1" height="1" fill="#848284"/><rect x="4" y="10" width="1" height="1" fill="#ffffff"/><rect x="5" y="10" width="1" height="1" fill="#848284"/><rect x="6" y="10" width="1" height="1" fill="#ffffff"/><rect x="8" y="10" width="1" height="1" fill="#848284"/><rect x="0" y="11" width="1" height="1" fill="#848284"/><rect x="1" y="11" width="1" height="1" fill="#ffffff"/><rect x="3" y="11" width="1" height="1" fill="#848284"/><rect x="4" y="11" width="1" height="1" fill="#ffffff"/><rect x="5" y="11" width="1" height="1" fill="#848284"/><rect x="6" y="11" width="1" height="1" fill="#ffffff"/><rect x="8" y="11" width="1" height="1" fill="#848284"/><rect x="0" y="12" width="1" height="1" fill="#848284"/><rect x="1" y="12" width="1" height="1" fill="#ffffff"/><rect x="3" y="12" width="1" height="1" fill="#848284"/><rect x="4" y="12" width="1" height="1" fill="#ffffff"/><rect x="5" y="12" width="1" height="1" fill="#848284"/><rect x="6" y="12" width="1" height="1" fill="#ffffff"/><rect x="8" y="12" width="1" height="1" fill="#848284"/><rect x="1" y="13" width="3" height="1" fill="#848284"/><rect x="4" y="13" width="1" height="1" fill="#ffffff"/><rect x="6" y="13" width="2" height="1" fill="#848284"/><rect x="8" y="13" width="1" height="1" fill="#ffffff"/><rect x="2" y="14" width="2" height="1" fill="#ffffff"/><rect x="7" y="14" width="1" height="1" fill="#ffffff"/></svg>
<svg style="left:325px;top:256px" width="17" height="14" shape-rendering="crispEdges"><rect x="0" y="0" width="7" height="1" fill="#848284"/><rect x="0" y="1" width="1" height="1" fill="#848284"/><rect x="1" y="1" width="5" height="1" fill="#ffffff"/><rect x="6" y="1" width="2" height="1" fill="#848284"/><rect x="0" y="2" width="1" height="1" fill="#848284"/><rect x="1" y="2" width="1" height="1" fill="#ffffff"/><rect x="2" y="2" width="2" height="1" fill="#848284"/><rect x="4" y="2" width="3" height="1" fill="#ffffff"/><rect x="7" y="2" width="2" height="1" fill="#848284"/><rect x="0" y="3" width="1" height="1" fill="#848284"/><rect x="1" y="3" width="7" height="1" fill="#ffffff"/><rect x="8" y="3" width="1" height="1" fill="#848284"/><rect x="9" y="3" width="1" height="1" fill="#ffffff"/><rect x="0" y="4" width="1" height="1" fill="#848284"/><rect x="1" y="4" width="1" height="1" fill="#ffffff"/><rect x="2" y="4" width="11" height="1" fill="#848284"/><rect x="13" y="4" width="1" height="1" fill="#ffffff"/><rect x="0" y="5" width="1" height="1" fill="#848284"/><rect x="1" y="5" width="6" height="1" fill="#ffffff"/><rect x="7" y="5" width="1" height="1" fill="#848284"/><rect x="8" y="5" width="4" height="1" fill="#ffffff"/><rect x="12" y="5" width="2" height="1" fill="#848284"/><rect x="14" y="5" width="1" height="1" fill="#ffffff"/><rect x="0" y="6" width="1" height="1" fill="#848284"/><rect x="1" y="6" width="1" height="1" fill="#ffffff"/><rect x="2" y="6" width="6" height="1" fill="#848284"/><rect x="8" y="6" width="1" height="1" fill="#ffffff"/><rect x="9" y="6" width="2" height="1" fill="#848284"/><rect x="11" y="6" width="2" height="1" fill="#ffffff"/><rect x="13" y="6" width="2" height="1" fill="#848284"/><rect x="15" y="6" width="1" height="1" fill="#ffffff"/><rect x="0" y="7" width="1" height="1" fill="#848284"/><rect x="1" y="7" width="6" height="1" fill="#ffffff"/><rect x="7" y="7" width="1" height="1" fill="#848284"/><rect x="8" y="7" width="6" height="1" fill="#ffffff"/><rect x="14" y="7" width="1" height="1" fill="#848284"/><rect x="15" y="7" width="1" height="1" fill="#ffffff"/><rect x="0" y="8" width="1" height="1" fill="#848284"/><rect x="1" y="8" width="1" height="1" fill="#ffffff"/><rect x="2" y="8" width="6" height="1" fill="#848284"/><rect x="8" y="8" width="1" height="1" fill="#ffffff"/><rect x="9" y="8" width="6" height="1" fill="#848284"/><rect x="15" y="8" width="1" height="1" fill="#ffffff"/><rect x="0" y="9" width="7" height="1" fill="#848284"/><rect x="7" y="9" width="7" height="1" fill="#ffffff"/><rect x="14" y="9" width="1" height="1" fill="#848284"/><rect x="15" y="9" width="1" height="1" fill="#ffffff"/><rect x="1" y="10" width="5" height="1" fill="#ffffff"/><rect x="6" y="10" width="2" height="1" fill="#848284"/><rect x="8" y="10" width="1" height="1" fill="#ffffff"/><rect x="9" y="10" width="6" height="1" fill="#848284"/><rect x="15" y="10" width="1" height="1" fill="#ffffff"/><rect x="6" y="11" width="2" height="1" fill="#848284"/><rect x="8" y="11" width="6" height="1" fill="#ffffff"/><rect x="14" y="11" width="1" height="1" fill="#848284"/><rect x="15" y="11" width="1" height="1" fill="#ffffff"/><rect x="6" y="12" width="10" height="1" fill="#848284"/><rect x="16" y="12" width="1" height="1" fill="#ffffff"/><rect x="7" y="13" width="10" height="1" fill="#ffffff"/></svg>
<svg style="left:348px;top:256px" width="16" height="14" shape-rendering="crispEdges"><rect x="4" y="0" width="6" height="1" fill="#848284"/><rect x="1" y="1" width="3" height="1" fill="#848284"/><rect x="4" y="1" width="6" height="1" fill="#ffffff"/><rect x="10" y="1" width="3" height="1" fill="#848284"/><rect x="0" y="2" width="2" height="1" fill="#848284"/><rect x="2" y="2" width="1" height="1" fill="#ffffff"/><rect x="3" y="2" width="8" height="1" fill="#848284"/><rect x="11" y="2" width="1" height="1" fill="#ffffff"/><rect x="12" y="2" width="1" height="1" fill="#848284"/><rect x="13" y="2" width="1" height="1" fill="#ffffff"/><rect x="0" y="3" width="2" height="1" fill="#848284"/><rect x="2" y="3" width="1" height="1" fill="#ffffff"/><rect x="3" y="3" width="9" height="1" fill="#848284"/><rect x="12" y="3" width="2" height="1" fill="#ffffff"/><rect x="0" y="4" width="2" height="1" fill="#848284"/><rect x="2" y="4" width="1" height="1" fill="#ffffff"/><rect x="3" y="4" width="9" height="1" fill="#848284"/><rect x="12" y="4" width="1" height="1" fill="#ffffff"/><rect x="0" y="5" width="2" height="1" fill="#848284"/><rect x="2" y="5" width="1" height="1" fill="#ffffff"/><rect x="3" y="5" width="10" height="1" fill="#848284"/><rect x="13" y="5" width="1" height="1" fill="#ffffff"/><rect x="0" y="6" width="2" height="1" fill="#848284"/><rect x="2" y="6" width="1" height="1" fill="#ffffff"/><rect x="3" y="6" width="5" height="1" fill="#848284"/><rect x="8" y="6" width="5" height="1" fill="#ffffff"/><rect x="13" y="6" width="1" height="1" fill="#848284"/><rect x="14" y="6" width="1" height="1" fill="#ffffff"/><rect x="0" y="7" width="2" height="1" fill="#848284"/><rect x="2" y="7" width="1" height="1" fill="#ffffff"/><rect x="3" y="7" width="12" height="1" fill="#848284"/><rect x="15" y="7" width="1" height="1" fill="#ffffff"/><rect x="0" y="8" width="2" height="1" fill="#848284"/><rect x="2" y="8" width="1" height="1" fill="#ffffff"/><rect x="3" y="8" width="5" height="1" fill="#848284"/><rect x="8" y="8" width="5" height="1" fill="#ffffff"/><rect x="13" y="8" width="2" height="1" fill="#848284"/><rect x="15" y="8" width="1" height="1" fill="#ffffff"/><rect x="0" y="9" width="2" height="1" fill="#848284"/><rect x="2" y="9" width="1" height="1" fill="#ffffff"/><rect x="3" y="9" width="12" height="1" fill="#848284"/><rect x="15" y="9" width="1" height="1" fill="#ffffff"/><rect x="0" y="10" width="2" height="1" fill="#848284"/><rect x="2" y="10" width="1" height="1" fill="#ffffff"/><rect x="3" y="10" width="5" height="1" fill="#848284"/><rect x="8" y="10" width="5" height="1" fill="#ffffff"/><rect x="13" y="10" width="2" height="1" fill="#848284"/><rect x="15" y="10" width="1" height="1" fill="#ffffff"/><rect x="0" y="11" width="14" height="1" fill="#848284"/><rect x="14" y="11" width="1" height="1" fill="#ffffff"/><rect x="1" y="12" width="6" height="1" fill="#ffffff"/><rect x="7" y="12" width="7" height="1" fill="#848284"/><rect x="14" y="12" width="1" height="1" fill="#ffffff"/><rect x="7" y="13" width="8" height="1" fill="#ffffff"/></svg>
<svg style="left:379px;top:258px" width="16" height="10" shape-rendering="crispEdges"><rect x="3" y="0" width="11" height="1" fill="#848284"/><rect x="3" y="1" width="12" height="1" fill="#848284"/><rect x="15" y="1" width="1" height="1" fill="#ffffff"/><rect x="4" y="2" width="9" height="1" fill="#ffffff"/><rect x="13" y="2" width="2" height="1" fill="#848284"/><rect x="15" y="2" width="1" height="1" fill="#ffffff"/><rect x="4" y="3" width="1" height="1" fill="#848284"/><rect x="12" y="3" width="2" height="1" fill="#848284"/><rect x="14" y="3" width="1" height="1" fill="#ffffff"/><rect x="3" y="4" width="2" height="1" fill="#848284"/><rect x="12" y="4" width="2" height="1" fill="#848284"/><rect x="14" y="4" width="1" height="1" fill="#ffffff"/><rect x="2" y="5" width="12" height="1" fill="#848284"/><rect x="14" y="5" width="1" height="1" fill="#ffffff"/><rect x="1" y="6" width="13" height="1" fill="#848284"/><rect x="14" y="6" width="1" height="1" fill="#ffffff"/><rect x="2" y="7" width="2" height="1" fill="#848284"/><rect x="4" y="7" width="10" height="1" fill="#ffffff"/><rect x="3" y="8" width="1" height="1" fill="#848284"/><rect x="4" y="8" width="1" height="1" fill="#ffffff"/><rect x="4" y="9" width="1" height="1" fill="#ffffff"/></svg>
<svg style="left:402px;top:258px" width="16" height="10" shape-rendering="crispEdges"><rect x="2" y="0" width="11" height="1" fill="#848284"/><rect x="1" y="1" width="12" height="1" fill="#848284"/><rect x="0" y="2" width="2" height="1" fill="#848284"/><rect x="2" y="2" width="11" height="1" fill="#ffffff"/><rect x="0" y="3" width="2" height="1" fill="#848284"/><rect x="2" y="3" width="1" height="1" fill="#ffffff"/><rect x="10" y="3" width="1" height="1" fill="#848284"/><rect x="0" y="4" width="2" height="1" fill="#848284"/><rect x="2" y="4" width="1" height="1" fill="#ffffff"/><rect x="10" y="4" width="2" height="1" fill="#848284"/><rect x="0" y="5" width="13" height="1" fill="#848284"/><rect x="13" y="5" width="1" height="1" fill="#ffffff"/><rect x="0" y="6" width="14" height="1" fill="#848284"/><rect x="1" y="7" width="8" height="1" fill="#ffffff"/><rect x="9" y="7" width="3" height="1" fill="#848284"/><rect x="12" y="7" width="1" height="1" fill="#ffffff"/><rect x="9" y="8" width="2" height="1" fill="#848284"/><rect x="11" y="8" width="1" height="1" fill="#ffffff"/><rect x="9" y="9" width="1" height="1" fill="#848284"/><rect x="10" y="9" width="1" height="1" fill="#ffffff"/></svg>
<div style="left:6px;top:278px;width:878px;height:177px;background:#fff;border-top:1px solid #000;border-left:1px solid #000"></div>
<div style="left:884px;top:278px;width:1px;height:177px;background:#a9a7a9"></div>
<div style="left:6px;top:453px;width:862px;height:1px;background:#c0c0c0"></div>
<div style="left:866px;top:279px;width:1px;height:175px;background:#c0c0c0"></div>
<div style="left:867px;top:278px;width:17px;height:177px;background:#cfcccf;border-left:1px solid #fff"></div>
<div style="left:868px;top:279px;width:16px;height:14px;background:#c6c3c6;border-top:1px solid #fff;border-left:1px solid #fff;border-right:1px solid #000;border-bottom:1px solid #000"></div>
<svg style="left:1px;top:1px" width="890" height="657"><path d="M872.5 287L879.5 287L876 283Z" fill="#fff"/></svg>
<svg style="left:0;top:0" width="890" height="657"><path d="M872.5 287L879.5 287L876 283Z" fill="#8c8a8c"/></svg>
<div style="left:868px;top:293px;width:16px;height:28px;background:#c6c3c6;border-top:1px solid #fff;border-left:1px solid #fff;border-right:1px solid #000;border-bottom:1px solid #000"></div>
<div style="left:868px;top:440px;width:16px;height:15px;background:#c6c3c6;border-top:1px solid #fff;border-left:1px solid #fff;border-right:1px solid #000;border-bottom:1px solid #000"></div>
<svg style="left:0;top:0" width="890" height="657"><path d="M872.5 445L879.5 445L876 449Z" fill="#000"/></svg>
<div style="left:6px;top:454px;width:862px;height:16px;background:#cfcccf;border-top:1px solid #fff"></div>
<div style="left:6px;top:455px;width:16px;height:15px;background:#c6c3c6;border-top:1px solid #fff;border-left:1px solid #fff;border-right:1px solid #000;border-bottom:1px solid #000"></div>
<svg style="left:1px;top:1px" width="890" height="657"><path d="M16 458.5L16 465.5L12 462Z" fill="#fff"/></svg>
<svg style="left:0;top:0" width="890" height="657"><path d="M16 458.5L16 465.5L12 462Z" fill="#8c8a8c"/></svg>
<div style="left:22px;top:455px;width:728px;height:15px;background:#c6c3c6;border-top:1px solid #fff;border-left:1px solid #fff;border-right:1px solid #000;border-bottom:1px solid #000"></div>
<div style="left:852px;top:455px;width:16px;height:15px;background:#c6c3c6;border-top:1px solid #fff;border-left:1px solid #fff;border-right:1px solid #000;border-bottom:1px solid #000"></div>
<svg style="left:0;top:0" width="890" height="657"><path d="M858 458.5L858 465.5L862 462Z" fill="#000"/></svg>
<div style="left:868px;top:455px;width:16px;height:15px;background:#c6c3c6"></div>
<div style="left:5px;top:470px;width:880px;height:4px;background:#000"></div>
<div style="left:42px;top:284px;width:120px;height:163px;background:#c6c3c6;border-top:1px solid #d8d8d8;border-left:1px solid #d8d8d8;border-right:1px solid #000;border-bottom:1px solid #000"></div>
<div style="left:43px;top:285px;width:118px;height:161px;border-top:1px solid #fff;border-left:1px solid #fff;border-right:1px solid #9a989a;border-bottom:1px solid #9a989a"></div>
<div class="t" style="left:42px;top:291px;width:120px;text-align:center;letter-spacing:0.05px">Jul_Stocklist</div>
<div style="left:48px;top:309px;width:108px;height:132px;background:#fff;border-top:1px solid #000;border-left:1px solid #000;border-right:1px solid #c6c3c6;border-bottom:1px solid #c6c3c6"></div>
<div style="left:47px;top:308px;width:110px;height:134px;border-top:1px solid #9a989a;border-left:1px solid #9a989a;border-right:1px solid #fff;border-bottom:1px solid #fff"></div>
<div style="left:140px;top:310px;width:15px;height:131px;background:#cfcccf"></div>
<div style="left:140px;top:310px;width:15px;height:16px;background:#c6c3c6;border-top:1px solid #fff;border-left:1px solid #fff;border-right:1px solid #000;border-bottom:1px solid #000"></div>
<svg style="left:0;top:0" width="890" height="657"><path d="M143.5 320L150.5 320L147 316Z" fill="#000"/></svg>
<div style="left:140px;top:345px;width:15px;height:61px;background:#c6c3c6;border-top:1px solid #fff;border-left:1px solid #fff;border-right:1px solid #000;border-bottom:1px solid #000"></div>
<div style="left:140px;top:425px;width:15px;height:16px;background:#c6c3c6;border-top:1px solid #fff;border-left:1px solid #fff;border-right:1px solid #000;border-bottom:1px solid #000"></div>
<svg style="left:0;top:0" width="890" height="657"><path d="M143.5 431L150.5 431L147 435Z" fill="#000"/></svg>
<div style="left:48px;top:310px;width:92px;height:131px;overflow:hidden">
<div class="t" style="left:18px;top:0px;letter-spacing:0.1px">ISBN</div>
<div class="t" style="left:18px;top:15px;letter-spacing:0.1px">Title</div>
<div class="t" style="left:18px;top:30px;letter-spacing:0.1px">PH</div>
<div class="t" style="left:18px;top:45px;letter-spacing:0.1px">Price</div>
<div class="t" style="left:18px;top:60px;letter-spacing:0.1px">Illust</div>
<div class="t" style="left:18px;top:75px;letter-spacing:0.1px">Size</div>
<div class="t" style="left:18px;top:90px;letter-spacing:0.1px">Pages</div>
<div class="t" style="left:18px;top:105px;letter-spacing:0.1px">PubDate</div>
<div class="t" style="left:18px;top:120px;letter-spacing:0.1px">Publisher</div>
</div>
<div style="left:272px;top:299px;width:120px;height:131px;background:#c6c3c6;border-top:1px solid #d8d8d8;border-left:1px solid #d8d8d8;border-right:1px solid #000;border-bottom:1px solid #000"></div>
<div style="left:273px;top:300px;width:118px;height:129px;border-top:1px solid #fff;border-left:1px solid #fff;border-right:1px solid #9a989a;border-bottom:1px solid #9a989a"></div>
<div class="t" style="left:272px;top:306px;width:120px;text-align:center;letter-spacing:0.05px">Codes</div>
<div style="left:278px;top:324px;width:108px;height:100px;background:#fff;border-top:1px solid #000;border-left:1px solid #000;border-right:1px solid #c6c3c6;border-bottom:1px solid #c6c3c6"></div>
<div style="left:277px;top:323px;width:110px;height:102px;border-top:1px solid #9a989a;border-left:1px solid #9a989a;border-right:1px solid #fff;border-bottom:1px solid #fff"></div>
<svg style="left:296px;top:327px" width="5" height="5" shape-rendering="crispEdges"><rect x="2" y="0" width="1" height="1" fill="#404040"/><rect x="0" y="1" width="1" height="1" fill="#404040"/><rect x="2" y="1" width="1" height="1" fill="#404040"/><rect x="4" y="1" width="1" height="1" fill="#404040"/><rect x="1" y="2" width="3" height="1" fill="#404040"/><rect x="1" y="3" width="1" height="1" fill="#404040"/><rect x="3" y="3" width="1" height="1" fill="#404040"/><rect x="1" y="4" width="1" height="1" fill="#404040"/><rect x="3" y="4" width="1" height="1" fill="#404040"/></svg>
<svg style="left:282px;top:342px" width="7" height="10" shape-rendering="crispEdges"><rect x="2" y="0" width="3" height="1" fill="#000000"/><rect x="1" y="1" width="1" height="1" fill="#000000"/><rect x="2" y="1" width="3" height="1" fill="#f0f000"/><rect x="5" y="1" width="1" height="1" fill="#000000"/><rect x="0" y="2" width="1" height="1" fill="#000000"/><rect x="1" y="2" width="2" height="1" fill="#f0f000"/><rect x="3" y="2" width="1" height="1" fill="#000000"/><rect x="4" y="2" width="2" height="1" fill="#f0f000"/><rect x="6" y="2" width="1" height="1" fill="#000000"/><rect x="0" y="3" width="1" height="1" fill="#000000"/><rect x="1" y="3" width="5" height="1" fill="#f0f000"/><rect x="6" y="3" width="1" height="1" fill="#000000"/><rect x="1" y="4" width="1" height="1" fill="#000000"/><rect x="2" y="4" width="3" height="1" fill="#f0f000"/><rect x="5" y="4" width="1" height="1" fill="#000000"/><rect x="2" y="5" width="1" height="1" fill="#000000"/><rect x="3" y="5" width="1" height="1" fill="#f0f000"/><rect x="4" y="5" width="1" height="1" fill="#000000"/><rect x="2" y="6" width="1" height="1" fill="#000000"/><rect x="3" y="6" width="2" height="1" fill="#f0f000"/><rect x="5" y="6" width="1" height="1" fill="#000000"/><rect x="2" y="7" width="1" height="1" fill="#000000"/><rect x="3" y="7" width="1" height="1" fill="#f0f000"/><rect x="4" y="7" width="1" height="1" fill="#000000"/><rect x="2" y="8" width="1" height="1" fill="#000000"/><rect x="3" y="8" width="2" height="1" fill="#f0f000"/><rect x="5" y="8" width="1" height="1" fill="#000000"/><rect x="2" y="9" width="3" height="1" fill="#000000"/></svg>
<div class="t" style="left:296px;top:340px;letter-spacing:0.3px">Code</div>
<div class="t" style="left:296px;top:355px;letter-spacing:0.3px">Cover</div>
<div style="left:162px;top:345px;width:108px;height:1px;background:#000"></div>
<div style="left:161px;top:342px;width:5px;height:7px;background:#fff;border:1px solid #000"></div>
<div style="left:269px;top:342px;width:4px;height:7px;background:#fff;border:1px solid #000"></div>
<div style="left:6px;top:474px;width:878px;height:177px;background:#fff;border-left:1px solid #000"></div>
<div style="left:7px;top:474px;width:876px;height:11px;background:#c6c3c6;border-top:1px solid #fff;border-bottom:1px solid #000"></div>
<div style="left:7px;top:485px;width:68px;height:18px;background:#c6c3c6;border-top:1px solid #fff;border-left:1px solid #fff"></div>
<div style="left:7px;top:503px;width:68px;height:1px;background:#000"></div>
<div class="t" style="left:8px;top:485px;letter-spacing:0.3px">Field</div>
<div style="left:7px;top:504px;width:68px;height:18px;background:#c6c3c6;border-top:1px solid #fff;border-left:1px solid #fff"></div>
<div style="left:7px;top:522px;width:68px;height:1px;background:#000"></div>
<div class="t" style="left:8px;top:504px;letter-spacing:0.3px">Alias</div>
<div style="left:7px;top:523px;width:68px;height:18px;background:#c6c3c6;border-top:1px solid #fff;border-left:1px solid #fff"></div>
<div style="left:7px;top:541px;width:68px;height:1px;background:#000"></div>
<div class="t" style="left:8px;top:523px;letter-spacing:0.3px">Table</div>
<div style="left:7px;top:542px;width:68px;height:18px;background:#c6c3c6;border-top:1px solid #fff;border-left:1px solid #fff"></div>
<div style="left:7px;top:560px;width:68px;height:1px;background:#000"></div>
<div class="t" style="left:8px;top:542px;letter-spacing:0.3px">Sort</div>
<div style="left:7px;top:561px;width:68px;height:18px;background:#c6c3c6;border-top:1px solid #fff;border-left:1px solid #fff"></div>
<div style="left:7px;top:579px;width:68px;height:1px;background:#000"></div>
<div class="t" style="left:8px;top:561px;letter-spacing:0.3px">Visible</div>
<div style="left:7px;top:580px;width:68px;height:18px;background:#c6c3c6;border-top:1px solid #fff;border-left:1px solid #fff"></div>
<div style="left:7px;top:598px;width:68px;height:1px;background:#000"></div>
<div class="t" style="left:8px;top:580px;letter-spacing:0.3px">Function</div>
<div style="left:7px;top:599px;width:68px;height:18px;background:#c6c3c6;border-top:1px solid #fff;border-left:1px solid #fff"></div>
<div style="left:7px;top:617px;width:68px;height:1px;background:#000"></div>
<div class="t" style="left:8px;top:599px;letter-spacing:0.3px">Criterion</div>
<div style="left:7px;top:618px;width:68px;height:17px;background:#c6c3c6;border-top:1px solid #fff;border-left:1px solid #fff"></div>
<div class="t" style="left:8px;top:618px;letter-spacing:0.3px">Or</div>
<div style="left:75px;top:474px;width:1px;height:161px;background:#000"></div>
<div style="left:76px;top:475px;width:1px;height:9px;background:#fff"></div>
<div style="left:195px;top:474px;width:1px;height:11px;background:#000"></div>
<div style="left:195px;top:485px;width:1px;height:150px;background:#bdbabd"></div>
<div style="left:196px;top:475px;width:1px;height:9px;background:#fff"></div>
<div style="left:315px;top:474px;width:1px;height:11px;background:#000"></div>
<div style="left:315px;top:485px;width:1px;height:150px;background:#bdbabd"></div>
<div style="left:316px;top:475px;width:1px;height:9px;background:#fff"></div>
<div style="left:435px;top:474px;width:1px;height:11px;background:#000"></div>
<div style="left:435px;top:485px;width:1px;height:150px;background:#bdbabd"></div>
<div style="left:436px;top:475px;width:1px;height:9px;background:#fff"></div>
<div style="left:555px;top:474px;width:1px;height:11px;background:#000"></div>
<div style="left:555px;top:485px;width:1px;height:150px;background:#bdbabd"></div>
<div style="left:556px;top:475px;width:1px;height:9px;background:#fff"></div>
<div style="left:675px;top:474px;width:1px;height:11px;background:#000"></div>
<div style="left:675px;top:485px;width:1px;height:150px;background:#bdbabd"></div>
<div style="left:676px;top:475px;width:1px;height:9px;background:#fff"></div>
<div style="left:795px;top:474px;width:1px;height:11px;background:#000"></div>
<div style="left:795px;top:485px;width:1px;height:150px;background:#bdbabd"></div>
<div style="left:796px;top:475px;width:1px;height:9px;background:#fff"></div>
<div style="left:76px;top:503px;width:792px;height:1px;background:#bdbabd"></div>
<div style="left:76px;top:522px;width:792px;height:1px;background:#bdbabd"></div>
<div style="left:76px;top:541px;width:792px;height:1px;background:#bdbabd"></div>
<div style="left:76px;top:560px;width:792px;height:1px;background:#bdbabd"></div>
<div style="left:76px;top:579px;width:792px;height:1px;background:#bdbabd"></div>
<div style="left:76px;top:598px;width:792px;height:1px;background:#bdbabd"></div>
<div style="left:76px;top:617px;width:792px;height:1px;background:#bdbabd"></div>
<div class="t" style="left:78px;top:485px;letter-spacing:0.12px">Publisher</div>
<div class="t" style="left:78px;top:523px;letter-spacing:0.12px">Jul_Stocklist</div>
<div class="t" style="left:78px;top:542px;letter-spacing:0.12px">ascending</div>
<div style="left:130px;top:564px;width:12px;height:12px;background:#fff;border:1px solid #000;border-top-width:2px;border-left-width:2px;border-right-color:#c0c0c0;border-bottom-color:#c0c0c0"></div>
<svg style="left:133px;top:567px" width="8" height="8" shape-rendering="crispEdges"><rect x="6" y="0" width="2" height="1" fill="#000000"/><rect x="6" y="1" width="2" height="1" fill="#000000"/><rect x="5" y="2" width="2" height="1" fill="#000000"/><rect x="0" y="3" width="2" height="1" fill="#000000"/><rect x="4" y="3" width="3" height="1" fill="#000000"/><rect x="0" y="4" width="3" height="1" fill="#000000"/><rect x="4" y="4" width="2" height="1" fill="#000000"/><rect x="1" y="5" width="5" height="1" fill="#000000"/><rect x="2" y="6" width="3" height="1" fill="#000000"/><rect x="3" y="7" width="1" height="1" fill="#000000"/></svg>
<div class="t" style="left:198px;top:485px;letter-spacing:0.12px">Author</div>
<div class="t" style="left:198px;top:523px;letter-spacing:0.12px">Jul_Stocklist</div>
<div class="t" style="left:198px;top:542px;letter-spacing:0.12px">ascending</div>
<div style="left:250px;top:564px;width:12px;height:12px;background:#fff;border:1px solid #000;border-top-width:2px;border-left-width:2px;border-right-color:#c0c0c0;border-bottom-color:#c0c0c0"></div>
<svg style="left:253px;top:567px" width="8" height="8" shape-rendering="crispEdges"><rect x="6" y="0" width="2" height="1" fill="#000000"/><rect x="6" y="1" width="2" height="1" fill="#000000"/><rect x="5" y="2" width="2" height="1" fill="#000000"/><rect x="0" y="3" width="2" height="1" fill="#000000"/><rect x="4" y="3" width="3" height="1" fill="#000000"/><rect x="0" y="4" width="3" height="1" fill="#000000"/><rect x="4" y="4" width="2" height="1" fill="#000000"/><rect x="1" y="5" width="5" height="1" fill="#000000"/><rect x="2" y="6" width="3" height="1" fill="#000000"/><rect x="3" y="7" width="1" height="1" fill="#000000"/></svg>
<div class="t" style="left:318px;top:485px;letter-spacing:0.12px">Title</div>
<div class="t" style="left:318px;top:523px;letter-spacing:0.12px">Jul_Stocklist</div>
<div class="t" style="left:318px;top:542px;letter-spacing:0.12px">ascending</div>
<div style="left:370px;top:564px;width:12px;height:12px;background:#fff;border:1px solid #000;border-top-width:2px;border-left-width:2px;border-right-color:#c0c0c0;border-bottom-color:#c0c0c0"></div>
<svg style="left:373px;top:567px" width="8" height="8" shape-rendering="crispEdges"><rect x="6" y="0" width="2" height="1" fill="#000000"/><rect x="6" y="1" width="2" height="1" fill="#000000"/><rect x="5" y="2" width="2" height="1" fill="#000000"/><rect x="0" y="3" width="2" height="1" fill="#000000"/><rect x="4" y="3" width="3" height="1" fill="#000000"/><rect x="0" y="4" width="3" height="1" fill="#000000"/><rect x="4" y="4" width="2" height="1" fill="#000000"/><rect x="1" y="5" width="5" height="1" fill="#000000"/><rect x="2" y="6" width="3" height="1" fill="#000000"/><rect x="3" y="7" width="1" height="1" fill="#000000"/></svg>
<div class="t" style="left:318px;top:599px;letter-spacing:0.12px">LIKE '*AA*'</div>
<div class="t" style="left:438px;top:485px;letter-spacing:0.12px">Price</div>
<div class="t" style="left:438px;top:504px;letter-spacing:0.12px">Retail</div>
<div class="t" style="left:438px;top:523px;letter-spacing:0.12px">Jul_Stocklist</div>
<div style="left:490px;top:564px;width:12px;height:12px;background:#fff;border:1px solid #000;border-top-width:2px;border-left-width:2px;border-right-color:#c0c0c0;border-bottom-color:#c0c0c0"></div>
<svg style="left:493px;top:567px" width="8" height="8" shape-rendering="crispEdges"><rect x="6" y="0" width="2" height="1" fill="#000000"/><rect x="6" y="1" width="2" height="1" fill="#000000"/><rect x="5" y="2" width="2" height="1" fill="#000000"/><rect x="0" y="3" width="2" height="1" fill="#000000"/><rect x="4" y="3" width="3" height="1" fill="#000000"/><rect x="0" y="4" width="3" height="1" fill="#000000"/><rect x="4" y="4" width="2" height="1" fill="#000000"/><rect x="1" y="5" width="5" height="1" fill="#000000"/><rect x="2" y="6" width="3" height="1" fill="#000000"/><rect x="3" y="7" width="1" height="1" fill="#000000"/></svg>
<div class="t" style="left:558px;top:485px;letter-spacing:0.12px">Cover</div>
<div class="t" style="left:558px;top:523px;letter-spacing:0.12px">Codes</div>
<div style="left:610px;top:564px;width:12px;height:12px;background:#fff;border:1px solid #000;border-top-width:2px;border-left-width:2px;border-right-color:#c0c0c0;border-bottom-color:#c0c0c0"></div>
<svg style="left:613px;top:567px" width="8" height="8" shape-rendering="crispEdges"><rect x="6" y="0" width="2" height="1" fill="#000000"/><rect x="6" y="1" width="2" height="1" fill="#000000"/><rect x="5" y="2" width="2" height="1" fill="#000000"/><rect x="0" y="3" width="2" height="1" fill="#000000"/><rect x="4" y="3" width="3" height="1" fill="#000000"/><rect x="0" y="4" width="3" height="1" fill="#000000"/><rect x="4" y="4" width="2" height="1" fill="#000000"/><rect x="1" y="5" width="5" height="1" fill="#000000"/><rect x="2" y="6" width="3" height="1" fill="#000000"/><rect x="3" y="7" width="1" height="1" fill="#000000"/></svg>
<div class="t" style="left:678px;top:485px;letter-spacing:0.12px">PH</div>
<div class="t" style="left:678px;top:523px;letter-spacing:0.12px">Jul_Stocklist</div>
<div style="left:730px;top:564px;width:12px;height:12px;background:#fff;border:1px solid #000;border-top-width:2px;border-left-width:2px;border-right-color:#c0c0c0;border-bottom-color:#c0c0c0"></div>
<div class="t" style="left:678px;top:599px;letter-spacing:0.12px">'H'</div>
<div style="left:850px;top:564px;width:12px;height:12px;background:#fff;border:1px solid #000;border-top-width:2px;border-left-width:2px;border-right-color:#c0c0c0;border-bottom-color:#c0c0c0"></div>
<div style="left:867px;top:485px;width:17px;height:150px;background:#cfcccf;border-left:1px solid #fff"></div>
<div style="left:868px;top:485px;width:16px;height:16px;background:#c6c3c6;border-top:1px solid #fff;border-left:1px solid #fff;border-right:1px solid #000;border-bottom:1px solid #000"></div>
<svg style="left:1px;top:1px" width="890" height="657"><path d="M872.5 494L879.5 494L876 490Z" fill="#fff"/></svg>
<svg style="left:0;top:0" width="890" height="657"><path d="M872.5 494L879.5 494L876 490Z" fill="#8c8a8c"/></svg>
<div style="left:868px;top:501px;width:16px;height:75px;background:#c6c3c6;border-top:1px solid #fff;border-left:1px solid #fff;border-right:1px solid #000;border-bottom:1px solid #000"></div>
<div style="left:868px;top:620px;width:16px;height:15px;background:#c6c3c6;border-top:1px solid #fff;border-left:1px solid #fff;border-right:1px solid #000;border-bottom:1px solid #000"></div>
<svg style="left:0;top:0" width="890" height="657"><path d="M872.5 625L879.5 625L876 629Z" fill="#000"/></svg>
<div style="left:6px;top:635px;width:862px;height:16px;background:#cfcccf;border-top:1px solid #fff"></div>
<div style="left:6px;top:636px;width:16px;height:15px;background:#c6c3c6;border-top:1px solid #fff;border-left:1px solid #fff;border-right:1px solid #000;border-bottom:1px solid #000"></div>
<svg style="left:1px;top:1px" width="890" height="657"><path d="M16 639.5L16 646.5L12 643Z" fill="#fff"/></svg>
<svg style="left:0;top:0" width="890" height="657"><path d="M16 639.5L16 646.5L12 643Z" fill="#8c8a8c"/></svg>
<div style="left:22px;top:636px;width:249px;height:15px;background:#c6c3c6;border-top:1px solid #fff;border-left:1px solid #fff;border-right:1px solid #000;border-bottom:1px solid #000"></div>
<div style="left:852px;top:636px;width:16px;height:15px;background:#c6c3c6;border-top:1px solid #fff;border-left:1px solid #fff;border-right:1px solid #000;border-bottom:1px solid #000"></div>
<svg style="left:0;top:0" width="890" height="657"><path d="M858 639.5L858 646.5L862 643Z" fill="#000"/></svg>
<div style="left:868px;top:635px;width:16px;height:16px;background:#c6c3c6"></div>
</div></body></html>
